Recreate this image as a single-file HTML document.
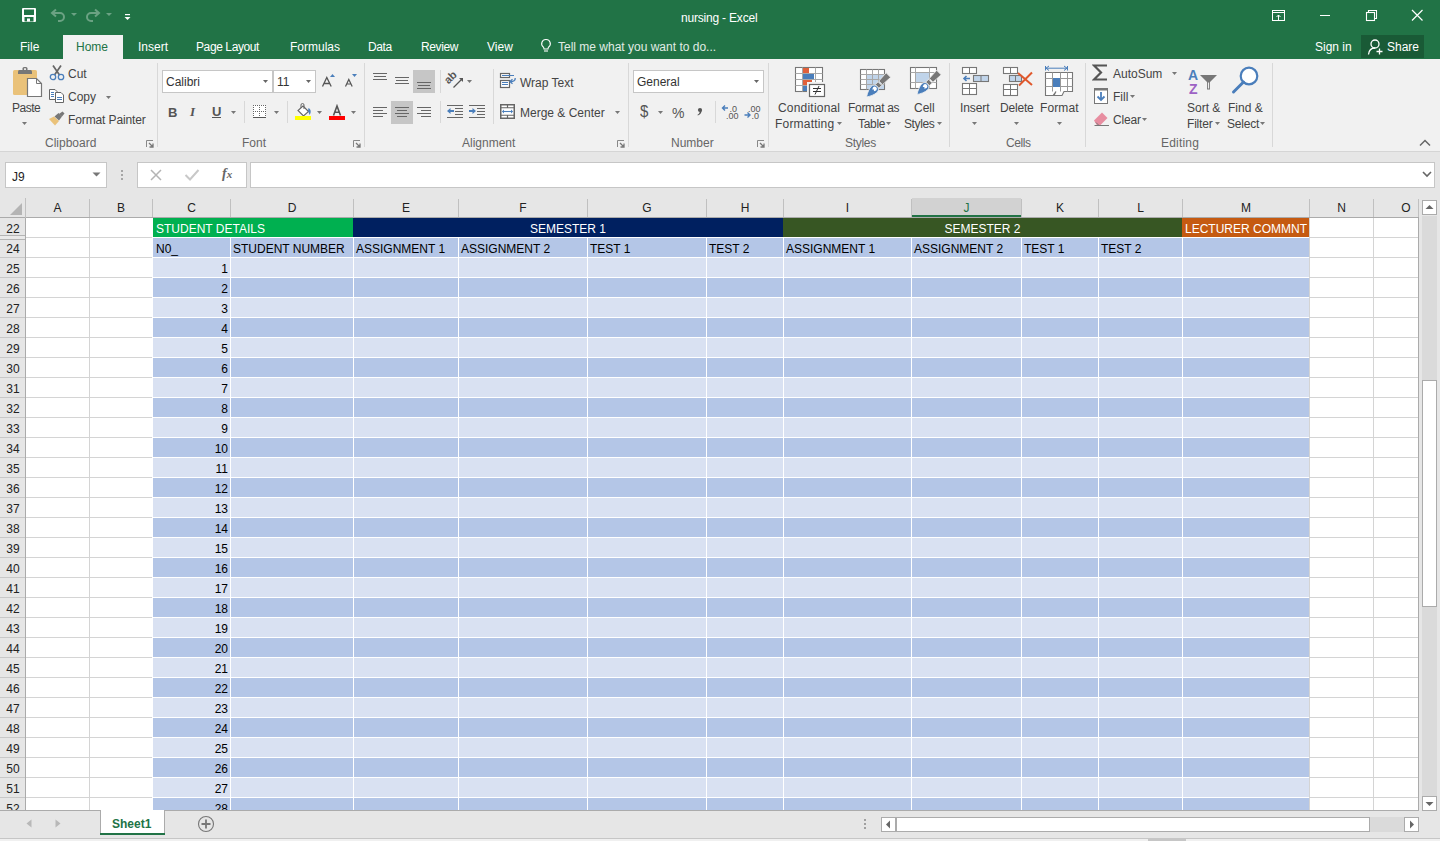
<!DOCTYPE html><html><head><meta charset="utf-8"><style>
html,body{margin:0;padding:0;} body{width:1440px;height:841px;overflow:hidden;position:relative;background:#E6E6E6;font-family:"Liberation Sans", sans-serif;}
.t{position:absolute;white-space:nowrap;}
.r{position:absolute;}
</style></head><body>
<div class="r" style="left:0px;top:0px;width:1440px;height:59px;background:#217346;"></div>
<svg class="r" style="left:21px;top:7px;" width="16" height="16" viewBox="0 0 16 16"><rect x="1" y="1" width="14" height="14" rx="1" fill="#fff"/><rect x="3" y="2.5" width="10" height="5.5" fill="#217346"/><rect x="3.5" y="10" width="9" height="4.5" fill="#217346"/><rect x="6" y="11.5" width="3" height="3" fill="#fff"/></svg>
<svg class="r" style="left:50px;top:7px;" width="16" height="16" viewBox="0 0 16 16"><path d="M3 6 H10 A4 4 0 0 1 10 14 H8" fill="none" stroke="#6BA283" stroke-width="2"/><path d="M6 2.5 L2 6 L6 9.5" fill="none" stroke="#6BA283" stroke-width="2"/></svg>
<svg class="r" style="left:70px;top:12px;" width="8" height="6" viewBox="0 0 8 6"><path d="M1 1 H7 L4 4 Z" fill="#6BA283"/></svg>
<svg class="r" style="left:85px;top:7px;" width="16" height="16" viewBox="0 0 16 16"><path d="M13 6 H6 A4 4 0 0 0 6 14 H8" fill="none" stroke="#6BA283" stroke-width="2"/><path d="M10 2.5 L14 6 L10 9.5" fill="none" stroke="#6BA283" stroke-width="2"/></svg>
<svg class="r" style="left:105px;top:12px;" width="8" height="6" viewBox="0 0 8 6"><path d="M1 1 H7 L4 4 Z" fill="#6BA283"/></svg>
<svg class="r" style="left:123px;top:12px;" width="10" height="10" viewBox="0 0 10 10"><rect x="2" y="2" width="5" height="1.2" fill="#fff"/><path d="M1.5 5 H7.5 L4.5 8 Z" fill="#fff"/></svg>
<div class="t" style="left:681px;top:11px;font-size:12px;line-height:14px;color:#fff;letter-spacing:-0.2px;">nursing - Excel</div>
<svg class="r" style="left:1271px;top:9px;" width="16" height="13" viewBox="0 0 16 13"><rect x="1.5" y="1.5" width="12" height="10" fill="none" stroke="#fff" stroke-width="1"/><line x1="1.5" y1="3.5" x2="13.5" y2="3.5" stroke="#fff" stroke-width="1"/><path d="M7.5 11 V6 M5.5 8 L7.5 6 L9.5 8" fill="none" stroke="#fff" stroke-width="1"/></svg>
<div class="r" style="left:1320px;top:15px;width:10px;height:1px;background:#fff;"></div>
<svg class="r" style="left:1365px;top:9px;" width="13" height="13" viewBox="0 0 13 13"><rect x="1.5" y="3.5" width="8" height="8" fill="none" stroke="#fff" stroke-width="1.1"/><path d="M3.5 3.5 V1.5 H11.5 V9.5 H9.5" fill="none" stroke="#fff" stroke-width="1.1"/></svg>
<svg class="r" style="left:1411px;top:9px;" width="13" height="13" viewBox="0 0 13 13"><path d="M1 1 L11.5 11.5 M11.5 1 L1 11.5" stroke="#fff" stroke-width="1.2"/></svg>
<div class="r" style="left:63px;top:35px;width:60px;height:24px;background:#F1F1F1;"></div>
<div class="t" style="left:20px;top:40px;font-size:12px;line-height:14px;color:#fff;">File</div>
<div class="t" style="left:138px;top:40px;font-size:12px;line-height:14px;color:#fff;">Insert</div>
<div class="t" style="left:196px;top:40px;font-size:12px;line-height:14px;color:#fff;letter-spacing:-0.4px;">Page Layout</div>
<div class="t" style="left:290px;top:40px;font-size:12px;line-height:14px;color:#fff;">Formulas</div>
<div class="t" style="left:368px;top:40px;font-size:12px;line-height:14px;color:#fff;letter-spacing:-0.4px;">Data</div>
<div class="t" style="left:421px;top:40px;font-size:12px;line-height:14px;color:#fff;letter-spacing:-0.4px;">Review</div>
<div class="t" style="left:487px;top:40px;font-size:12px;line-height:14px;color:#fff;">View</div>
<div class="t" style="left:76px;top:40px;font-size:12px;line-height:14px;color:#217346;">Home</div>
<svg class="r" style="left:540px;top:38px;" width="12" height="16" viewBox="0 0 12 16"><path d="M6 1.5 A4.2 4.2 0 0 0 3.3 9 C3.8 9.6 4 10.3 4 11 H8 C8 10.3 8.2 9.6 8.7 9 A4.2 4.2 0 0 0 6 1.5 Z" fill="none" stroke="#fff" stroke-width="1.1"/><line x1="4" y1="13" x2="8" y2="13" stroke="#fff" stroke-width="1.1"/></svg>
<div class="t" style="left:558px;top:40px;font-size:12px;line-height:14px;color:#E0ECE5;">Tell me what you want to do...</div>
<div class="t" style="left:1315px;top:40px;font-size:12px;line-height:14px;color:#fff;">Sign in</div>
<div class="r" style="left:1361px;top:35px;width:63px;height:23px;background:#195A36;"></div>
<svg class="r" style="left:1367px;top:38px;" width="17" height="18" viewBox="0 0 17 18"><circle cx="8" cy="6" r="4" fill="none" stroke="#fff" stroke-width="1.3"/><path d="M1.5 16.5 C2 12 4.5 10 8 10" fill="none" stroke="#fff" stroke-width="1.3"/><path d="M12.5 10.5 V16.5 M9.5 13.5 H15.5" stroke="#fff" stroke-width="1.3"/></svg>
<div class="t" style="left:1387px;top:40px;font-size:12px;line-height:14px;color:#fff;">Share</div>
<div class="r" style="left:0px;top:59px;width:1440px;height:92px;background:#F1F1F1;"></div>
<div class="r" style="left:0px;top:151px;width:1440px;height:1px;background:#D5D5D5;"></div>
<svg class="r" style="left:12px;top:66px;" width="31" height="32" viewBox="0 0 31 32"><rect x="1" y="4" width="24" height="25" rx="1.5" fill="#EAC27A"/><path d="M6 5.5 Q6 4 7.5 4 H18.5 Q20 4 20 5.5 V8 H6 Z" fill="#777"/><rect x="10.5" y="1" width="5" height="4" rx="1.5" fill="#777"/><rect x="12" y="2.3" width="2" height="1.6" fill="#F1F1F1"/><path d="M15.5 12.5 H24.5 L29.5 17.5 V30.5 H15.5 Z" fill="#fff" stroke="#777" stroke-width="1.2"/><path d="M24.5 12.5 V17.5 H29.5" fill="none" stroke="#777" stroke-width="1"/></svg>
<div class="t" style="left:12px;top:101px;font-size:12px;line-height:14px;color:#444;letter-spacing:-0.5px;">Paste</div>
<svg class="r" style="left:22px;top:122px;" width="5" height="3" viewBox="0 0 5 3"><path d="M0 0 H5 L2.5 3 Z" fill="#777"/></svg>
<svg class="r" style="left:49px;top:64px;" width="16" height="17" viewBox="0 0 16 17"><path d="M4 1.5 L10.5 11 M12 1.5 L5.5 11" stroke="#666" stroke-width="1.7"/><circle cx="4" cy="13" r="2.7" fill="none" stroke="#4A7EBB" stroke-width="1.3"/><circle cx="12" cy="13" r="2.7" fill="none" stroke="#4A7EBB" stroke-width="1.3"/></svg>
<div class="t" style="left:68px;top:67px;font-size:12px;line-height:14px;color:#444;">Cut</div>
<svg class="r" style="left:48px;top:88px;" width="17" height="16" viewBox="0 0 17 16"><path d="M1.5 1.5 H7 L9 3.5 V11.5 H1.5 Z" fill="#fff" stroke="#666" stroke-width="1"/><rect x="3" y="4" width="3" height="1" fill="#4A7EBB"/><rect x="3" y="6" width="3" height="1" fill="#4A7EBB"/><rect x="3" y="8" width="3" height="1" fill="#4A7EBB"/><path d="M7.5 4.5 H13 L15.5 7 V14.5 H7.5 Z" fill="#fff" stroke="#666" stroke-width="1"/><rect x="9" y="9" width="5" height="1" fill="#4A7EBB"/><rect x="9" y="11" width="5" height="1" fill="#4A7EBB"/></svg>
<div class="t" style="left:68px;top:90px;font-size:12px;line-height:14px;color:#444;">Copy</div>
<svg class="r" style="left:106px;top:96px;" width="5" height="3" viewBox="0 0 5 3"><path d="M0 0 H5 L2.5 3 Z" fill="#777"/></svg>
<svg class="r" style="left:48px;top:111px;" width="18" height="16" viewBox="0 0 18 16"><path d="M1 8 L7 14.5 L11 10 L6 5.5 Z" fill="#EAC27A"/><path d="M6.5 5.5 L10.5 2 L14 5.5 L11 9.5 Z" fill="#777"/><path d="M11 3 L14.5 0.5 L16.5 2.5 L14 5.5" fill="#777"/></svg>
<div class="t" style="left:68px;top:113px;font-size:12px;line-height:14px;color:#444;letter-spacing:-0.12px;">Format Painter</div>
<div class="t" style="left:45px;top:136px;font-size:12px;line-height:14px;color:#666;">Clipboard</div>
<svg class="r" style="left:146px;top:140px;" width="8" height="8" viewBox="0 0 8 8"><path d="M0.5 7 V0.5 H7" fill="none" stroke="#888" stroke-width="1"/><path d="M3 3 L6.5 6.5 M3.5 7 H7 V3.5" fill="none" stroke="#777" stroke-width="1.3"/></svg>
<div class="r" style="left:157px;top:63px;width:1px;height:84px;background:#D8D8D8;"></div>
<div class="r" style="left:162px;top:70px;width:111px;height:23px;background:#fff;border:1px solid #C6C6C6;box-sizing:border-box;"></div>
<div class="t" style="left:166px;top:75px;font-size:12px;line-height:14px;color:#333;">Calibri</div>
<svg class="r" style="left:263px;top:80px;" width="5" height="3" viewBox="0 0 5 3"><path d="M0 0 H5 L2.5 3 Z" fill="#666"/></svg>
<div class="r" style="left:273px;top:70px;width:43px;height:23px;background:#fff;border:1px solid #C6C6C6;box-sizing:border-box;"></div>
<div class="t" style="left:277px;top:75px;font-size:12px;line-height:14px;color:#333;">11</div>
<svg class="r" style="left:306px;top:80px;" width="5" height="3" viewBox="0 0 5 3"><path d="M0 0 H5 L2.5 3 Z" fill="#666"/></svg>
<svg class="r" style="left:320px;top:72px;" width="40" height="17" viewBox="0 0 40 17"><path d="M2.5 14.5 L6.8 5.5 L11.2 14.5 M4 11.5 H9.7" fill="none" stroke="#555" stroke-width="1.3"/><path d="M10 5 L12.5 2 L15 5 Z" fill="#4A7EBB"/><path d="M25.5 14.5 L28.8 7.5 L32.2 14.5 M26.8 12 H30.8" fill="none" stroke="#555" stroke-width="1.2"/><path d="M32 2 H37 L34.5 5 Z" fill="#4A7EBB"/></svg>
<div class="t" style="left:168px;top:106px;font-size:13px;line-height:14px;color:#555;font-weight:bold;">B</div>
<div class="t" style="left:190px;top:105px;font-family:'Liberation Serif',serif;font-style:italic;font-weight:bold;font-size:13px;line-height:14px;color:#555;">I</div>
<div class="t" style="left:212px;top:105px;font-size:13px;line-height:14px;color:#555;font-weight:bold;">U</div>
<div class="r" style="left:212px;top:117px;width:9px;height:1px;background:#555;"></div>
<svg class="r" style="left:231px;top:111px;" width="5" height="3" viewBox="0 0 5 3"><path d="M0 0 H5 L2.5 3 Z" fill="#777"/></svg>
<div class="r" style="left:244px;top:101px;width:1px;height:22px;background:#D8D8D8;"></div>
<svg class="r" style="left:253px;top:105px;" width="13" height="13" viewBox="0 0 13 13"><rect x="0" y="0" width="13" height="12" fill="#fff"/><rect x="0" y="0" width="1" height="1" fill="#666"/><rect x="0" y="2" width="1" height="1" fill="#666"/><rect x="0" y="4" width="1" height="1" fill="#666"/><rect x="0" y="6" width="1" height="1" fill="#666"/><rect x="0" y="8" width="1" height="1" fill="#666"/><rect x="0" y="10" width="1" height="1" fill="#666"/><rect x="2" y="0" width="1" height="1" fill="#666"/><rect x="2" y="6" width="1" height="1" fill="#666"/><rect x="4" y="0" width="1" height="1" fill="#666"/><rect x="4" y="6" width="1" height="1" fill="#666"/><rect x="6" y="0" width="1" height="1" fill="#666"/><rect x="6" y="2" width="1" height="1" fill="#666"/><rect x="6" y="4" width="1" height="1" fill="#666"/><rect x="6" y="6" width="1" height="1" fill="#666"/><rect x="6" y="8" width="1" height="1" fill="#666"/><rect x="6" y="10" width="1" height="1" fill="#666"/><rect x="8" y="0" width="1" height="1" fill="#666"/><rect x="8" y="6" width="1" height="1" fill="#666"/><rect x="10" y="0" width="1" height="1" fill="#666"/><rect x="10" y="6" width="1" height="1" fill="#666"/><rect x="12" y="0" width="1" height="1" fill="#666"/><rect x="12" y="2" width="1" height="1" fill="#666"/><rect x="12" y="4" width="1" height="1" fill="#666"/><rect x="12" y="6" width="1" height="1" fill="#666"/><rect x="12" y="8" width="1" height="1" fill="#666"/><rect x="12" y="10" width="1" height="1" fill="#666"/><rect x="0" y="12" width="13" height="1" fill="#555"/></svg>
<svg class="r" style="left:274px;top:111px;" width="5" height="3" viewBox="0 0 5 3"><path d="M0 0 H5 L2.5 3 Z" fill="#777"/></svg>
<div class="r" style="left:287px;top:101px;width:1px;height:22px;background:#D8D8D8;"></div>
<svg class="r" style="left:295px;top:102px;" width="17" height="18" viewBox="0 0 17 18"><path d="M8 4 L13.5 9.5 L8.5 14 L3 8.5 Z" fill="#fff" stroke="#666" stroke-width="1.1"/><path d="M6 6 V3 Q6 1.5 7.5 1.5 Q9 1.5 9 3 V7" fill="none" stroke="#666" stroke-width="1"/><path d="M13.5 6 C16 7 16.5 10.5 14.5 13 C14 11 13.5 10 13 9 Z" fill="#4A7EBB"/><rect x="0" y="14" width="16" height="4" fill="#FFFF00"/></svg>
<svg class="r" style="left:317px;top:111px;" width="5" height="3" viewBox="0 0 5 3"><path d="M0 0 H5 L2.5 3 Z" fill="#777"/></svg>
<svg class="r" style="left:329px;top:104px;" width="16" height="16" viewBox="0 0 16 16"><path d="M4.5 11.5 L8 2 L11.5 11.5 M5.8 8.2 H10.2" fill="none" stroke="#555" stroke-width="1.6"/><rect x="0" y="12" width="16" height="4" fill="#FF0000"/></svg>
<svg class="r" style="left:351px;top:111px;" width="5" height="3" viewBox="0 0 5 3"><path d="M0 0 H5 L2.5 3 Z" fill="#777"/></svg>
<div class="t" style="left:242px;top:136px;font-size:12px;line-height:14px;color:#666;">Font</div>
<svg class="r" style="left:353px;top:140px;" width="8" height="8" viewBox="0 0 8 8"><path d="M0.5 7 V0.5 H7" fill="none" stroke="#888" stroke-width="1"/><path d="M3 3 L6.5 6.5 M3.5 7 H7 V3.5" fill="none" stroke="#777" stroke-width="1.3"/></svg>
<div class="r" style="left:364px;top:63px;width:1px;height:84px;background:#D8D8D8;"></div>
<div class="r" style="left:373px;top:73px;width:14px;height:1px;background:#666;"></div>
<div class="r" style="left:374px;top:76px;width:12px;height:1px;background:#666;"></div>
<div class="r" style="left:373px;top:79px;width:14px;height:1px;background:#666;"></div>
<div class="r" style="left:395px;top:77px;width:14px;height:1px;background:#666;"></div>
<div class="r" style="left:396px;top:80px;width:12px;height:1px;background:#666;"></div>
<div class="r" style="left:395px;top:83px;width:14px;height:1px;background:#666;"></div>
<div class="r" style="left:413px;top:70px;width:22px;height:23px;background:#C6C6C6;"></div>
<div class="r" style="left:417px;top:82px;width:14px;height:1px;background:#666;"></div>
<div class="r" style="left:418px;top:85px;width:12px;height:1px;background:#666;"></div>
<div class="r" style="left:417px;top:88px;width:14px;height:1px;background:#666;"></div>
<div class="r" style="left:440px;top:70px;width:1px;height:23px;background:#D8D8D8;"></div>
<svg class="r" style="left:445px;top:71px;" width="22" height="19" viewBox="0 0 22 19"><text x="0" y="0" font-family="Liberation Sans" font-size="11" font-weight="bold" fill="#555" transform="translate(3.5 13.5) rotate(-45)">ab</text><path d="M8.5 16.5 L17 8" fill="none" stroke="#555" stroke-width="1.2"/><path d="M14 7 H18 V11 Z" fill="#555"/></svg>
<svg class="r" style="left:467px;top:80px;" width="5" height="3" viewBox="0 0 5 3"><path d="M0 0 H5 L2.5 3 Z" fill="#777"/></svg>
<div class="r" style="left:493px;top:69px;width:1px;height:55px;background:#D8D8D8;"></div>
<svg class="r" style="left:499px;top:72px;" width="18" height="17" viewBox="0 0 18 17"><rect x="1.5" y="1.5" width="9" height="4" fill="#fff" stroke="#666" stroke-width="1.2"/><path d="M3 3.5 H15" stroke="#4A7EBB" stroke-width="1"/><rect x="1.5" y="8.5" width="9" height="7" fill="#fff" stroke="#666" stroke-width="1.2"/><path d="M3 10.5 H9 M3 12.5 H9" stroke="#4A7EBB" stroke-width="1"/><path d="M16.2 6 C16.5 8.5 14.5 9.5 11.5 9.5" fill="none" stroke="#4A7EBB" stroke-width="1.3"/><path d="M13.5 7.3 L11 9.5 L13.5 11.7" fill="none" stroke="#4A7EBB" stroke-width="1.3"/></svg>
<div class="t" style="left:520px;top:76px;font-size:12px;line-height:14px;color:#444;">Wrap Text</div>
<div class="r" style="left:373px;top:107px;width:14px;height:1px;background:#666;"></div>
<div class="r" style="left:373px;top:110px;width:10px;height:1px;background:#666;"></div>
<div class="r" style="left:373px;top:113px;width:14px;height:1px;background:#666;"></div>
<div class="r" style="left:373px;top:116px;width:10px;height:1px;background:#666;"></div>
<div class="r" style="left:391px;top:101px;width:22px;height:23px;background:#C6C6C6;"></div>
<div class="r" style="left:395px;top:107px;width:14px;height:1px;background:#666;"></div>
<div class="r" style="left:397px;top:110px;width:10px;height:1px;background:#666;"></div>
<div class="r" style="left:395px;top:113px;width:14px;height:1px;background:#666;"></div>
<div class="r" style="left:397px;top:116px;width:10px;height:1px;background:#666;"></div>
<div class="r" style="left:417px;top:107px;width:14px;height:1px;background:#666;"></div>
<div class="r" style="left:421px;top:110px;width:10px;height:1px;background:#666;"></div>
<div class="r" style="left:417px;top:113px;width:14px;height:1px;background:#666;"></div>
<div class="r" style="left:421px;top:116px;width:10px;height:1px;background:#666;"></div>
<div class="r" style="left:440px;top:101px;width:1px;height:22px;background:#D8D8D8;"></div>
<div class="r" style="left:447px;top:105px;width:16px;height:1px;background:#666;"></div>
<div class="r" style="left:455px;top:108px;width:8px;height:1px;background:#666;"></div>
<div class="r" style="left:455px;top:111px;width:8px;height:1px;background:#666;"></div>
<div class="r" style="left:455px;top:114px;width:8px;height:1px;background:#666;"></div>
<div class="r" style="left:447px;top:117px;width:16px;height:1px;background:#666;"></div>
<svg class="r" style="left:446px;top:107px;" width="9" height="9" viewBox="0 0 9 9"><path d="M1 3.5 L4.5 0.5 V2.5 H8 V4.5 H4.5 V6.5 Z" fill="#4A7EBB" transform="translate(0 0.5)"/></svg>
<div class="r" style="left:469px;top:105px;width:16px;height:1px;background:#666;"></div>
<div class="r" style="left:477px;top:108px;width:8px;height:1px;background:#666;"></div>
<div class="r" style="left:477px;top:111px;width:8px;height:1px;background:#666;"></div>
<div class="r" style="left:477px;top:114px;width:8px;height:1px;background:#666;"></div>
<div class="r" style="left:469px;top:117px;width:16px;height:1px;background:#666;"></div>
<svg class="r" style="left:468px;top:107px;" width="9" height="9" viewBox="0 0 9 9"><path d="M8 3.5 L4.5 0.5 V2.5 H1 V4.5 H4.5 V6.5 Z" fill="#4A7EBB" transform="translate(0 0.5)"/></svg>
<svg class="r" style="left:499px;top:103px;" width="17" height="17" viewBox="0 0 17 17"><rect x="1.75" y="1.75" width="13.5" height="13.5" fill="#fff" stroke="#666" stroke-width="1.5"/><path d="M1 4.75 H16 M1 12.25 H16 M8.5 1 V4.75 M8.5 12.25 V16" stroke="#666" stroke-width="1.2"/><path d="M3.5 8.5 H13.5" stroke="#4A7EBB" stroke-width="1.1"/><path d="M3 8.5 L5 6.5 V10.5 Z M14 8.5 L12 6.5 V10.5 Z" fill="#4A7EBB"/></svg>
<div class="t" style="left:520px;top:106px;font-size:12px;line-height:14px;color:#444;">Merge &amp; Center</div>
<svg class="r" style="left:615px;top:111px;" width="5" height="3" viewBox="0 0 5 3"><path d="M0 0 H5 L2.5 3 Z" fill="#777"/></svg>
<div class="t" style="left:462px;top:136px;font-size:12px;line-height:14px;color:#666;">Alignment</div>
<svg class="r" style="left:617px;top:140px;" width="8" height="8" viewBox="0 0 8 8"><path d="M0.5 7 V0.5 H7" fill="none" stroke="#888" stroke-width="1"/><path d="M3 3 L6.5 6.5 M3.5 7 H7 V3.5" fill="none" stroke="#777" stroke-width="1.3"/></svg>
<div class="r" style="left:628px;top:63px;width:1px;height:84px;background:#D8D8D8;"></div>
<div class="r" style="left:633px;top:70px;width:131px;height:23px;background:#fff;border:1px solid #C6C6C6;box-sizing:border-box;"></div>
<div class="t" style="left:637px;top:75px;font-size:12px;line-height:14px;color:#333;">General</div>
<svg class="r" style="left:754px;top:80px;" width="5" height="3" viewBox="0 0 5 3"><path d="M0 0 H5 L2.5 3 Z" fill="#666"/></svg>
<div class="t" style="left:640px;top:104px;font-size:15px;line-height:14px;color:#555;transform:scaleY(1.1);">$</div>
<svg class="r" style="left:658px;top:111px;" width="5" height="3" viewBox="0 0 5 3"><path d="M0 0 H5 L2.5 3 Z" fill="#777"/></svg>
<div class="t" style="left:672px;top:106px;font-size:14px;line-height:14px;color:#555;">%</div>
<svg class="r" style="left:696px;top:107px;" width="7" height="9" viewBox="0 0 7 9"><circle cx="4" cy="3" r="2.1" fill="#555"/><path d="M5.6 3.5 C5.6 6 4 7.8 1.8 8.5 L1.5 7.8 C2.8 7 3.6 6 3.8 4.5 Z" fill="#555"/></svg>
<div class="r" style="left:715px;top:101px;width:1px;height:22px;background:#D8D8D8;"></div>
<svg class="r" style="left:721px;top:103px;" width="18" height="17" viewBox="0 0 18 17"><path d="M1.5 5 H7 M4 2.5 L1.5 5 L4 7.5" fill="none" stroke="#4A7EBB" stroke-width="1.4"/><text x="8.5" y="8.5" font-family="Liberation Sans" font-size="9" fill="#555">.0</text><text x="5" y="15.5" font-family="Liberation Sans" font-size="9" fill="#555">.00</text></svg>
<svg class="r" style="left:743px;top:103px;" width="18" height="17" viewBox="0 0 18 17"><text x="5" y="8.5" font-family="Liberation Sans" font-size="9" fill="#555">.00</text><path d="M1.5 12 H7 M4.5 9.5 L7 12 L4.5 14.5" fill="none" stroke="#4A7EBB" stroke-width="1.4"/><text x="8.5" y="15.5" font-family="Liberation Sans" font-size="9" fill="#555">.0</text></svg>
<div class="t" style="left:671px;top:136px;font-size:12px;line-height:14px;color:#666;">Number</div>
<svg class="r" style="left:757px;top:140px;" width="8" height="8" viewBox="0 0 8 8"><path d="M0.5 7 V0.5 H7" fill="none" stroke="#888" stroke-width="1"/><path d="M3 3 L6.5 6.5 M3.5 7 H7 V3.5" fill="none" stroke="#777" stroke-width="1.3"/></svg>
<div class="r" style="left:768px;top:63px;width:1px;height:84px;background:#D8D8D8;"></div>
<svg class="r" style="left:794px;top:66px;" width="32" height="32" viewBox="0 0 32 32"><rect x="1.5" y="1.5" width="27" height="24" fill="#fff" stroke="#777" stroke-width="1.1"/><path d="M8.5 1.5 V25.5 M21.5 1.5 V25.5 M1.5 7.5 H28.5 M1.5 13.5 H28.5 M1.5 19.5 H28.5" stroke="#A8A8A8" stroke-width="1"/><rect x="9" y="2" width="6" height="5" fill="#E0603A"/><rect x="9" y="8" width="11" height="5" fill="#4A7EBB"/><rect x="9" y="14" width="9" height="5" fill="#E0603A"/><rect x="9" y="20" width="4" height="5" fill="#4A7EBB"/><rect x="13" y="16" width="20" height="16" fill="#F1F1F1"/><rect x="15.5" y="18.5" width="15" height="12" fill="#fff" stroke="#666" stroke-width="1.2"/><path d="M19 22.5 H27 M19 25.5 H27" stroke="#333" stroke-width="1"/><path d="M21 28.5 L25 20" stroke="#333" stroke-width="1"/></svg>
<div class="t" style="left:778px;top:101px;font-size:12px;line-height:14px;color:#444;letter-spacing:0.2px;">Conditional</div>
<div class="t" style="left:775px;top:117px;font-size:12px;line-height:14px;color:#444;letter-spacing:0.2px;">Formatting</div>
<svg class="r" style="left:837px;top:122px;" width="5" height="3" viewBox="0 0 5 3"><path d="M0 0 H5 L2.5 3 Z" fill="#777"/></svg>
<svg class="r" style="left:855px;top:62px;" width="40" height="40" viewBox="0 0 40 40"><rect x="5.5" y="7.5" width="24" height="20" fill="#fff" stroke="#777" stroke-width="1.1"/><rect x="12" y="13" width="17" height="14" fill="#C0D4EA"/><path d="M11.5 7.5 V27.5 M17.5 7.5 V27.5 M23.5 7.5 V27.5 M5.5 12.5 H29.5 M5.5 17.5 H29.5 M5.5 22.5 H29.5" stroke="#A8A8A8" stroke-width="1"/><g transform="translate(11.5 35) rotate(45)"><path d="M0 0 C-2.5 -4 -4.2 -8 -4.2 -11 A4.2 4.2 0 0 1 4.2 -11 C4.2 -7 2 -3 0 0 Z" fill="#4A7EBB" stroke="#F1F1F1" stroke-width="0.8"/><path d="M-2.2 -11.5 A2.2 2.2 0 0 1 2.2 -11.5 L1.2 -9.3 L0 -10.5 L-1.2 -9.3 Z" fill="#fff"/><rect x="-2.6" y="-19" width="5.2" height="4" fill="#777" stroke="#F1F1F1" stroke-width="0.8"/><path d="M-2.6 -20 L-3.2 -31 H3.2 L2.6 -20 Z" fill="#777" stroke="#F1F1F1" stroke-width="0.8"/></g></svg>
<div class="t" style="left:848px;top:101px;font-size:12px;line-height:14px;color:#444;letter-spacing:-0.3px;">Format as</div>
<div class="t" style="left:858px;top:117px;font-size:12px;line-height:14px;color:#444;letter-spacing:-0.3px;">Table</div>
<svg class="r" style="left:886px;top:122px;" width="5" height="3" viewBox="0 0 5 3"><path d="M0 0 H5 L2.5 3 Z" fill="#777"/></svg>
<svg class="r" style="left:905px;top:62px;" width="40" height="40" viewBox="0 0 40 40"><rect x="5.5" y="5.5" width="26" height="21" fill="#fff" stroke="#777" stroke-width="1.1"/><path d="M10.5 5.5 V26.5 M24.5 5.5 V26.5 M5.5 10.5 H31.5 M5.5 20.5 H31.5" stroke="#A8A8A8" stroke-width="1"/><rect x="11" y="11" width="13" height="9" fill="#C0D4EA"/><g transform="translate(12 32.5) rotate(45)"><path d="M0 0 C-2.5 -4 -4.2 -8 -4.2 -11 A4.2 4.2 0 0 1 4.2 -11 C4.2 -7 2 -3 0 0 Z" fill="#4A7EBB" stroke="#F1F1F1" stroke-width="0.8"/><path d="M-2.2 -11.5 A2.2 2.2 0 0 1 2.2 -11.5 L1.2 -9.3 L0 -10.5 L-1.2 -9.3 Z" fill="#fff"/><rect x="-2.6" y="-19" width="5.2" height="4" fill="#777" stroke="#F1F1F1" stroke-width="0.8"/><path d="M-2.6 -20 L-3.2 -31 H3.2 L2.6 -20 Z" fill="#777" stroke="#F1F1F1" stroke-width="0.8"/></g></svg>
<div class="t" style="left:914px;top:101px;font-size:12px;line-height:14px;color:#444;">Cell</div>
<div class="t" style="left:904px;top:117px;font-size:12px;line-height:14px;color:#444;letter-spacing:-0.4px;">Styles</div>
<svg class="r" style="left:937px;top:122px;" width="5" height="3" viewBox="0 0 5 3"><path d="M0 0 H5 L2.5 3 Z" fill="#777"/></svg>
<div class="t" style="left:845px;top:136px;font-size:12px;line-height:14px;color:#666;letter-spacing:-0.3px;">Styles</div>
<div class="r" style="left:949px;top:63px;width:1px;height:84px;background:#D8D8D8;"></div>
<svg class="r" style="left:961px;top:66px;" width="30" height="30" viewBox="0 0 30 30"><rect x="1.5" y="1.5" width="14" height="6" fill="#fff" stroke="#777" stroke-width="1.1"/><path d="M8.5 1.5 V7.5" stroke="#777" stroke-width="1"/><rect x="12.5" y="9.5" width="15" height="6" fill="#C0D4EA" stroke="#777" stroke-width="1.1"/><path d="M20 9.5 V15.5" stroke="#777" stroke-width="1"/><path d="M3 12.5 H9 M5.5 10 L3 12.5 L5.5 15" fill="none" stroke="#4A7EBB" stroke-width="1.6"/><rect x="1.5" y="17.5" width="14" height="11" fill="#fff" stroke="#777" stroke-width="1.1"/><path d="M8.5 17.5 V28.5 M1.5 22.5 H15.5" stroke="#777" stroke-width="1"/></svg>
<div class="t" style="left:960px;top:101px;font-size:12px;line-height:14px;color:#444;letter-spacing:-0.1px;">Insert</div>
<svg class="r" style="left:972px;top:122px;" width="5" height="3" viewBox="0 0 5 3"><path d="M0 0 H5 L2.5 3 Z" fill="#777"/></svg>
<svg class="r" style="left:1002px;top:66px;" width="33" height="31" viewBox="0 0 33 31"><rect x="1.5" y="1.5" width="14" height="6" fill="#fff" stroke="#777" stroke-width="1.1"/><path d="M8.5 1.5 V7.5" stroke="#777" stroke-width="1"/><rect x="7.5" y="9.5" width="12" height="6" fill="#C0D4EA" stroke="#777" stroke-width="1.1"/><path d="M13.5 9.5 V15.5" stroke="#777" stroke-width="1"/><rect x="1.5" y="18.5" width="14" height="11" fill="#fff" stroke="#777" stroke-width="1.1"/><path d="M8.5 18.5 V29.5 M1.5 23.5 H15.5" stroke="#777" stroke-width="1"/><path d="M16 7 L30 19 M30 6.5 L17 19.5" stroke="#E0582C" stroke-width="2"/></svg>
<div class="t" style="left:1000px;top:101px;font-size:12px;line-height:14px;color:#444;letter-spacing:-0.2px;">Delete</div>
<svg class="r" style="left:1014px;top:122px;" width="5" height="3" viewBox="0 0 5 3"><path d="M0 0 H5 L2.5 3 Z" fill="#777"/></svg>
<svg class="r" style="left:1044px;top:65px;" width="31" height="33" viewBox="0 0 31 33"><path d="M1.5 1 V5.5 M23.5 1 V5.5 M2 3.2 H23 M5 1 L2 3.2 L5 5.5 M20 1 L23 3.2 L20 5.5" fill="none" stroke="#4A7EBB" stroke-width="1"/><path d="M1.5 7.5 H28.5 V26.5 L20 26.5 L18 30.5 H10 L12 26.5 L9 30.5 H1.5 Z" fill="#fff" stroke="#777" stroke-width="1.1"/><path d="M1.5 13.5 H28.5 M1.5 21.5 H28.5 M8.5 7.5 V26.5 M16.5 7.5 V26.5 M23.5 7.5 V26.5" stroke="#999" stroke-width="1"/><rect x="9" y="13" width="7" height="9" fill="#4A7EBB"/></svg>
<div class="t" style="left:1040px;top:101px;font-size:12px;line-height:14px;color:#444;letter-spacing:0.1px;">Format</div>
<svg class="r" style="left:1057px;top:122px;" width="5" height="3" viewBox="0 0 5 3"><path d="M0 0 H5 L2.5 3 Z" fill="#777"/></svg>
<div class="t" style="left:1006px;top:136px;font-size:12px;line-height:14px;color:#666;letter-spacing:-0.4px;">Cells</div>
<div class="r" style="left:1085px;top:63px;width:1px;height:84px;background:#D8D8D8;"></div>
<svg class="r" style="left:1092px;top:64px;" width="17" height="17" viewBox="0 0 17 17"><path d="M15 1.5 H2 L9 8.5 L2 15.5 H15" fill="none" stroke="#555" stroke-width="2.2"/></svg>
<div class="t" style="left:1113px;top:67px;font-size:12px;line-height:14px;color:#444;">AutoSum</div>
<svg class="r" style="left:1172px;top:72px;" width="5" height="3" viewBox="0 0 5 3"><path d="M0 0 H5 L2.5 3 Z" fill="#777"/></svg>
<svg class="r" style="left:1093px;top:87px;" width="16" height="18" viewBox="0 0 16 18"><rect x="1.5" y="1.5" width="13" height="15" fill="#fff" stroke="#777" stroke-width="1"/><rect x="1" y="1" width="14" height="2.5" fill="#777"/><path d="M8 5 V13 M4.5 9.5 L8 13 L11.5 9.5" fill="none" stroke="#4A7EBB" stroke-width="1.8"/></svg>
<div class="t" style="left:1113px;top:90px;font-size:12px;line-height:14px;color:#444;">Fill</div>
<svg class="r" style="left:1130px;top:95px;" width="5" height="3" viewBox="0 0 5 3"><path d="M0 0 H5 L2.5 3 Z" fill="#777"/></svg>
<svg class="r" style="left:1093px;top:111px;" width="17" height="15" viewBox="0 0 17 15"><path d="M1 9.5 L9 1.5 L14.5 7 L7 14.5 H4 Z" fill="#E78DA0"/><path d="M3 11.5 L5.5 14 M1.5 14.5 H16" stroke="#777" stroke-width="1"/></svg>
<div class="t" style="left:1113px;top:113px;font-size:12px;line-height:14px;color:#444;letter-spacing:-0.2px;">Clear</div>
<svg class="r" style="left:1142px;top:118px;" width="5" height="3" viewBox="0 0 5 3"><path d="M0 0 H5 L2.5 3 Z" fill="#777"/></svg>
<div class="t" style="left:1188px;top:68px;font-size:14px;line-height:14px;color:#4A7EBB;font-weight:bold;">A</div>
<div class="t" style="left:1189px;top:82px;font-size:14px;line-height:14px;color:#9D62C4;font-weight:bold;">Z</div>
<svg class="r" style="left:1199px;top:74px;" width="19" height="17" viewBox="0 0 19 17"><path d="M1 1 H18 L11 8 V15.5 H8 V8 Z" fill="#777"/><path d="M9.5 8.5 V14.5" stroke="#eee" stroke-width="1.2"/></svg>
<div class="t" style="left:1187px;top:101px;font-size:12px;line-height:14px;color:#444;">Sort &amp;</div>
<div class="t" style="left:1187px;top:117px;font-size:12px;line-height:14px;color:#444;letter-spacing:-0.2px;">Filter</div>
<svg class="r" style="left:1215px;top:122px;" width="5" height="3" viewBox="0 0 5 3"><path d="M0 0 H5 L2.5 3 Z" fill="#777"/></svg>
<svg class="r" style="left:1230px;top:64px;" width="30" height="32" viewBox="0 0 30 32"><circle cx="19" cy="12" r="8.3" fill="#fff" stroke="#4A7EBB" stroke-width="2.2"/><path d="M13.5 18 L3.5 28" stroke="#4A7EBB" stroke-width="3" stroke-linecap="round"/></svg>
<div class="t" style="left:1228px;top:101px;font-size:12px;line-height:14px;color:#444;">Find &amp;</div>
<div class="t" style="left:1227px;top:117px;font-size:12px;line-height:14px;color:#444;letter-spacing:-0.2px;">Select</div>
<svg class="r" style="left:1260px;top:122px;" width="5" height="3" viewBox="0 0 5 3"><path d="M0 0 H5 L2.5 3 Z" fill="#777"/></svg>
<div class="t" style="left:1161px;top:136px;font-size:12px;line-height:14px;color:#666;letter-spacing:0.2px;">Editing</div>
<div class="r" style="left:1272px;top:63px;width:1px;height:84px;background:#D8D8D8;"></div>
<svg class="r" style="left:1419px;top:139px;" width="12" height="8" viewBox="0 0 12 8"><path d="M1 6.5 L6 1.5 L11 6.5" fill="none" stroke="#666" stroke-width="1.5"/></svg>
<div class="r" style="left:5px;top:162px;width:100px;height:24px;background:#fff;border:1px solid #C6C6C6;"></div>
<div class="t" style="left:12px;top:170px;font-size:12px;line-height:14px;color:#222;">J9</div>
<svg class="r" style="left:92px;top:172px;" width="9" height="6" viewBox="0 0 9 6"><path d="M0.5 0.5 H8.5 L4.5 4.5 Z" fill="#777"/></svg>
<div class="r" style="left:121px;top:170px;width:2px;height:2px;background:#A6A6A6;"></div>
<div class="r" style="left:121px;top:174px;width:2px;height:2px;background:#A6A6A6;"></div>
<div class="r" style="left:121px;top:178px;width:2px;height:2px;background:#A6A6A6;"></div>
<div class="r" style="left:137px;top:162px;width:108px;height:24px;background:#fff;border:1px solid #C6C6C6;"></div>
<svg class="r" style="left:149px;top:168px;" width="14" height="14" viewBox="0 0 14 14"><path d="M2 2 L12 12 M12 2 L2 12" stroke="#B4B4B4" stroke-width="1.5"/></svg>
<svg class="r" style="left:184px;top:168px;" width="16" height="14" viewBox="0 0 16 14"><path d="M1.5 7 L6 11.5 L14.5 2" fill="none" stroke="#C8C8C8" stroke-width="2"/></svg>
<div class="t" style="left:222px;top:165px;font-family:'Liberation Serif',serif;font-style:italic;font-weight:bold;font-size:14px;line-height:18px;color:#666;">f<span style="font-size:11px;">x</span></div>
<div class="r" style="left:250px;top:162px;width:1183px;height:24px;background:#fff;border:1px solid #C6C6C6;"></div>
<svg class="r" style="left:1422px;top:171px;" width="10" height="7" viewBox="0 0 10 7"><path d="M1 1 L5 5 L9 1" fill="none" stroke="#666" stroke-width="1.6"/></svg>
<div class="r" style="left:0px;top:198px;width:1418px;height:19px;background:#E6E6E6;"></div>
<div class="r" style="left:0px;top:217px;width:1419px;height:1px;background:#ABABAB;"></div>
<svg class="r" style="left:9px;top:202px;" width="14" height="14" viewBox="0 0 14 14"><path d="M13 1 V13 H1 Z" fill="#B4B4B4"/></svg>
<div class="r" style="left:89px;top:199px;width:1px;height:18px;background:#C0C0C0;"></div>
<div class="t" style="left:-142.5px;width:400px;text-align:center;top:201px;font-size:12px;line-height:14px;color:#222;">A</div>
<div class="r" style="left:152px;top:199px;width:1px;height:18px;background:#C0C0C0;"></div>
<div class="t" style="left:-79.0px;width:400px;text-align:center;top:201px;font-size:12px;line-height:14px;color:#222;">B</div>
<div class="r" style="left:230px;top:199px;width:1px;height:18px;background:#C0C0C0;"></div>
<div class="t" style="left:-8.5px;width:400px;text-align:center;top:201px;font-size:12px;line-height:14px;color:#222;">C</div>
<div class="r" style="left:353px;top:199px;width:1px;height:18px;background:#C0C0C0;"></div>
<div class="t" style="left:92.0px;width:400px;text-align:center;top:201px;font-size:12px;line-height:14px;color:#222;">D</div>
<div class="r" style="left:458px;top:199px;width:1px;height:18px;background:#C0C0C0;"></div>
<div class="t" style="left:206.0px;width:400px;text-align:center;top:201px;font-size:12px;line-height:14px;color:#222;">E</div>
<div class="r" style="left:587px;top:199px;width:1px;height:18px;background:#C0C0C0;"></div>
<div class="t" style="left:323.0px;width:400px;text-align:center;top:201px;font-size:12px;line-height:14px;color:#222;">F</div>
<div class="r" style="left:706px;top:199px;width:1px;height:18px;background:#C0C0C0;"></div>
<div class="t" style="left:447.0px;width:400px;text-align:center;top:201px;font-size:12px;line-height:14px;color:#222;">G</div>
<div class="r" style="left:783px;top:199px;width:1px;height:18px;background:#C0C0C0;"></div>
<div class="t" style="left:545.0px;width:400px;text-align:center;top:201px;font-size:12px;line-height:14px;color:#222;">H</div>
<div class="r" style="left:911px;top:199px;width:1px;height:18px;background:#C0C0C0;"></div>
<div class="t" style="left:647.5px;width:400px;text-align:center;top:201px;font-size:12px;line-height:14px;color:#222;">I</div>
<div class="r" style="left:912px;top:198px;width:109px;height:19px;background:#D2D2D2;"></div>
<div class="r" style="left:912px;top:215px;width:109px;height:2px;background:#217346;"></div>
<div class="r" style="left:1021px;top:199px;width:1px;height:18px;background:#C0C0C0;"></div>
<div class="t" style="left:766.5px;width:400px;text-align:center;top:201px;font-size:12px;line-height:14px;color:#217346;">J</div>
<div class="r" style="left:1098px;top:199px;width:1px;height:18px;background:#C0C0C0;"></div>
<div class="t" style="left:860.0px;width:400px;text-align:center;top:201px;font-size:12px;line-height:14px;color:#222;">K</div>
<div class="r" style="left:1182px;top:199px;width:1px;height:18px;background:#C0C0C0;"></div>
<div class="t" style="left:940.5px;width:400px;text-align:center;top:201px;font-size:12px;line-height:14px;color:#222;">L</div>
<div class="r" style="left:1309px;top:199px;width:1px;height:18px;background:#C0C0C0;"></div>
<div class="t" style="left:1046.0px;width:400px;text-align:center;top:201px;font-size:12px;line-height:14px;color:#222;">M</div>
<div class="r" style="left:1373px;top:199px;width:1px;height:18px;background:#C0C0C0;"></div>
<div class="t" style="left:1141.5px;width:400px;text-align:center;top:201px;font-size:12px;line-height:14px;color:#222;">N</div>
<div class="r" style="left:1418px;top:199px;width:1px;height:18px;background:#C0C0C0;"></div>
<div class="t" style="left:1206px;width:400px;text-align:center;top:201px;font-size:12px;line-height:14px;color:#222;">O</div>
<div class="r" style="left:25px;top:198px;width:1px;height:20px;background:#C0C0C0;"></div>
<div class="r" style="left:0px;top:218px;width:25px;height:592px;background:#E6E6E6;"></div>
<div class="r" style="left:25px;top:218px;width:1px;height:592px;background:#ABABAB;"></div>
<div class="r" style="left:26px;top:218px;width:1392px;height:592px;background:#fff;"></div>
<div class="r" style="left:1418px;top:217px;width:1px;height:594px;background:#ABABAB;"></div>
<div class="r" style="left:26px;top:237px;width:1392px;height:1px;background:#D4D4D4;"></div>
<div class="r" style="left:26px;top:257px;width:1392px;height:1px;background:#D4D4D4;"></div>
<div class="r" style="left:0px;top:257px;width:25px;height:1px;background:#C8C8C8;"></div>
<div class="r" style="left:26px;top:277px;width:1392px;height:1px;background:#D4D4D4;"></div>
<div class="r" style="left:0px;top:277px;width:25px;height:1px;background:#C8C8C8;"></div>
<div class="r" style="left:26px;top:297px;width:1392px;height:1px;background:#D4D4D4;"></div>
<div class="r" style="left:0px;top:297px;width:25px;height:1px;background:#C8C8C8;"></div>
<div class="r" style="left:26px;top:317px;width:1392px;height:1px;background:#D4D4D4;"></div>
<div class="r" style="left:0px;top:317px;width:25px;height:1px;background:#C8C8C8;"></div>
<div class="r" style="left:26px;top:337px;width:1392px;height:1px;background:#D4D4D4;"></div>
<div class="r" style="left:0px;top:337px;width:25px;height:1px;background:#C8C8C8;"></div>
<div class="r" style="left:26px;top:357px;width:1392px;height:1px;background:#D4D4D4;"></div>
<div class="r" style="left:0px;top:357px;width:25px;height:1px;background:#C8C8C8;"></div>
<div class="r" style="left:26px;top:377px;width:1392px;height:1px;background:#D4D4D4;"></div>
<div class="r" style="left:0px;top:377px;width:25px;height:1px;background:#C8C8C8;"></div>
<div class="r" style="left:26px;top:397px;width:1392px;height:1px;background:#D4D4D4;"></div>
<div class="r" style="left:0px;top:397px;width:25px;height:1px;background:#C8C8C8;"></div>
<div class="r" style="left:26px;top:417px;width:1392px;height:1px;background:#D4D4D4;"></div>
<div class="r" style="left:0px;top:417px;width:25px;height:1px;background:#C8C8C8;"></div>
<div class="r" style="left:26px;top:437px;width:1392px;height:1px;background:#D4D4D4;"></div>
<div class="r" style="left:0px;top:437px;width:25px;height:1px;background:#C8C8C8;"></div>
<div class="r" style="left:26px;top:457px;width:1392px;height:1px;background:#D4D4D4;"></div>
<div class="r" style="left:0px;top:457px;width:25px;height:1px;background:#C8C8C8;"></div>
<div class="r" style="left:26px;top:477px;width:1392px;height:1px;background:#D4D4D4;"></div>
<div class="r" style="left:0px;top:477px;width:25px;height:1px;background:#C8C8C8;"></div>
<div class="r" style="left:26px;top:497px;width:1392px;height:1px;background:#D4D4D4;"></div>
<div class="r" style="left:0px;top:497px;width:25px;height:1px;background:#C8C8C8;"></div>
<div class="r" style="left:26px;top:517px;width:1392px;height:1px;background:#D4D4D4;"></div>
<div class="r" style="left:0px;top:517px;width:25px;height:1px;background:#C8C8C8;"></div>
<div class="r" style="left:26px;top:537px;width:1392px;height:1px;background:#D4D4D4;"></div>
<div class="r" style="left:0px;top:537px;width:25px;height:1px;background:#C8C8C8;"></div>
<div class="r" style="left:26px;top:557px;width:1392px;height:1px;background:#D4D4D4;"></div>
<div class="r" style="left:0px;top:557px;width:25px;height:1px;background:#C8C8C8;"></div>
<div class="r" style="left:26px;top:577px;width:1392px;height:1px;background:#D4D4D4;"></div>
<div class="r" style="left:0px;top:577px;width:25px;height:1px;background:#C8C8C8;"></div>
<div class="r" style="left:26px;top:597px;width:1392px;height:1px;background:#D4D4D4;"></div>
<div class="r" style="left:0px;top:597px;width:25px;height:1px;background:#C8C8C8;"></div>
<div class="r" style="left:26px;top:617px;width:1392px;height:1px;background:#D4D4D4;"></div>
<div class="r" style="left:0px;top:617px;width:25px;height:1px;background:#C8C8C8;"></div>
<div class="r" style="left:26px;top:637px;width:1392px;height:1px;background:#D4D4D4;"></div>
<div class="r" style="left:0px;top:637px;width:25px;height:1px;background:#C8C8C8;"></div>
<div class="r" style="left:26px;top:657px;width:1392px;height:1px;background:#D4D4D4;"></div>
<div class="r" style="left:0px;top:657px;width:25px;height:1px;background:#C8C8C8;"></div>
<div class="r" style="left:26px;top:677px;width:1392px;height:1px;background:#D4D4D4;"></div>
<div class="r" style="left:0px;top:677px;width:25px;height:1px;background:#C8C8C8;"></div>
<div class="r" style="left:26px;top:697px;width:1392px;height:1px;background:#D4D4D4;"></div>
<div class="r" style="left:0px;top:697px;width:25px;height:1px;background:#C8C8C8;"></div>
<div class="r" style="left:26px;top:717px;width:1392px;height:1px;background:#D4D4D4;"></div>
<div class="r" style="left:0px;top:717px;width:25px;height:1px;background:#C8C8C8;"></div>
<div class="r" style="left:26px;top:737px;width:1392px;height:1px;background:#D4D4D4;"></div>
<div class="r" style="left:0px;top:737px;width:25px;height:1px;background:#C8C8C8;"></div>
<div class="r" style="left:26px;top:757px;width:1392px;height:1px;background:#D4D4D4;"></div>
<div class="r" style="left:0px;top:757px;width:25px;height:1px;background:#C8C8C8;"></div>
<div class="r" style="left:26px;top:777px;width:1392px;height:1px;background:#D4D4D4;"></div>
<div class="r" style="left:0px;top:777px;width:25px;height:1px;background:#C8C8C8;"></div>
<div class="r" style="left:26px;top:797px;width:1392px;height:1px;background:#D4D4D4;"></div>
<div class="r" style="left:0px;top:797px;width:25px;height:1px;background:#C8C8C8;"></div>
<div class="r" style="left:89px;top:218px;width:1px;height:592px;background:#D4D4D4;"></div>
<div class="r" style="left:152px;top:218px;width:1px;height:592px;background:#D4D4D4;"></div>
<div class="r" style="left:230px;top:218px;width:1px;height:592px;background:#D4D4D4;"></div>
<div class="r" style="left:353px;top:218px;width:1px;height:592px;background:#D4D4D4;"></div>
<div class="r" style="left:458px;top:218px;width:1px;height:592px;background:#D4D4D4;"></div>
<div class="r" style="left:587px;top:218px;width:1px;height:592px;background:#D4D4D4;"></div>
<div class="r" style="left:706px;top:218px;width:1px;height:592px;background:#D4D4D4;"></div>
<div class="r" style="left:783px;top:218px;width:1px;height:592px;background:#D4D4D4;"></div>
<div class="r" style="left:911px;top:218px;width:1px;height:592px;background:#D4D4D4;"></div>
<div class="r" style="left:1021px;top:218px;width:1px;height:592px;background:#D4D4D4;"></div>
<div class="r" style="left:1098px;top:218px;width:1px;height:592px;background:#D4D4D4;"></div>
<div class="r" style="left:1182px;top:218px;width:1px;height:592px;background:#D4D4D4;"></div>
<div class="r" style="left:1309px;top:218px;width:1px;height:592px;background:#D4D4D4;"></div>
<div class="r" style="left:1373px;top:218px;width:1px;height:592px;background:#D4D4D4;"></div>
<div class="r" style="left:0px;top:235px;width:25px;height:1px;background:#B4B4B4;"></div>
<div class="r" style="left:0px;top:236px;width:25px;height:3px;background:#EAEAEA;"></div>
<div class="r" style="left:0px;top:239px;width:25px;height:1px;background:#B4B4B4;"></div>
<div class="t" style="left:-187px;width:400px;text-align:center;top:222px;font-size:12px;line-height:14px;color:#222;">22</div>
<div class="t" style="left:-187px;width:400px;text-align:center;top:242px;font-size:12px;line-height:14px;color:#222;">24</div>
<div class="t" style="left:-187px;width:400px;text-align:center;top:262px;font-size:12px;line-height:14px;color:#222;">25</div>
<div class="t" style="left:-187px;width:400px;text-align:center;top:282px;font-size:12px;line-height:14px;color:#222;">26</div>
<div class="t" style="left:-187px;width:400px;text-align:center;top:302px;font-size:12px;line-height:14px;color:#222;">27</div>
<div class="t" style="left:-187px;width:400px;text-align:center;top:322px;font-size:12px;line-height:14px;color:#222;">28</div>
<div class="t" style="left:-187px;width:400px;text-align:center;top:342px;font-size:12px;line-height:14px;color:#222;">29</div>
<div class="t" style="left:-187px;width:400px;text-align:center;top:362px;font-size:12px;line-height:14px;color:#222;">30</div>
<div class="t" style="left:-187px;width:400px;text-align:center;top:382px;font-size:12px;line-height:14px;color:#222;">31</div>
<div class="t" style="left:-187px;width:400px;text-align:center;top:402px;font-size:12px;line-height:14px;color:#222;">32</div>
<div class="t" style="left:-187px;width:400px;text-align:center;top:422px;font-size:12px;line-height:14px;color:#222;">33</div>
<div class="t" style="left:-187px;width:400px;text-align:center;top:442px;font-size:12px;line-height:14px;color:#222;">34</div>
<div class="t" style="left:-187px;width:400px;text-align:center;top:462px;font-size:12px;line-height:14px;color:#222;">35</div>
<div class="t" style="left:-187px;width:400px;text-align:center;top:482px;font-size:12px;line-height:14px;color:#222;">36</div>
<div class="t" style="left:-187px;width:400px;text-align:center;top:502px;font-size:12px;line-height:14px;color:#222;">37</div>
<div class="t" style="left:-187px;width:400px;text-align:center;top:522px;font-size:12px;line-height:14px;color:#222;">38</div>
<div class="t" style="left:-187px;width:400px;text-align:center;top:542px;font-size:12px;line-height:14px;color:#222;">39</div>
<div class="t" style="left:-187px;width:400px;text-align:center;top:562px;font-size:12px;line-height:14px;color:#222;">40</div>
<div class="t" style="left:-187px;width:400px;text-align:center;top:582px;font-size:12px;line-height:14px;color:#222;">41</div>
<div class="t" style="left:-187px;width:400px;text-align:center;top:602px;font-size:12px;line-height:14px;color:#222;">42</div>
<div class="t" style="left:-187px;width:400px;text-align:center;top:622px;font-size:12px;line-height:14px;color:#222;">43</div>
<div class="t" style="left:-187px;width:400px;text-align:center;top:642px;font-size:12px;line-height:14px;color:#222;">44</div>
<div class="t" style="left:-187px;width:400px;text-align:center;top:662px;font-size:12px;line-height:14px;color:#222;">45</div>
<div class="t" style="left:-187px;width:400px;text-align:center;top:682px;font-size:12px;line-height:14px;color:#222;">46</div>
<div class="t" style="left:-187px;width:400px;text-align:center;top:702px;font-size:12px;line-height:14px;color:#222;">47</div>
<div class="t" style="left:-187px;width:400px;text-align:center;top:722px;font-size:12px;line-height:14px;color:#222;">48</div>
<div class="t" style="left:-187px;width:400px;text-align:center;top:742px;font-size:12px;line-height:14px;color:#222;">49</div>
<div class="t" style="left:-187px;width:400px;text-align:center;top:762px;font-size:12px;line-height:14px;color:#222;">50</div>
<div class="t" style="left:-187px;width:400px;text-align:center;top:782px;font-size:12px;line-height:14px;color:#222;">51</div>
<div class="t" style="left:-187px;width:400px;text-align:center;top:802px;font-size:12px;line-height:14px;color:#222;">52</div>
<div class="r" style="left:152px;top:218px;width:1157px;height:592px;background:#fff;"></div>
<div class="r" style="left:153px;top:218px;width:200px;height:19px;background:#00B050;"></div>
<div class="r" style="left:353px;top:218px;width:430px;height:19px;background:#002060;"></div>
<div class="r" style="left:783px;top:218px;width:399px;height:19px;background:#375623;"></div>
<div class="r" style="left:1182px;top:218px;width:127px;height:19px;background:#C55A11;"></div>
<div class="r" style="left:153px;top:238px;width:77px;height:19px;background:#B4C6E7;"></div>
<div class="r" style="left:231px;top:238px;width:122px;height:19px;background:#B4C6E7;"></div>
<div class="r" style="left:354px;top:238px;width:104px;height:19px;background:#B4C6E7;"></div>
<div class="r" style="left:459px;top:238px;width:128px;height:19px;background:#B4C6E7;"></div>
<div class="r" style="left:588px;top:238px;width:118px;height:19px;background:#B4C6E7;"></div>
<div class="r" style="left:707px;top:238px;width:76px;height:19px;background:#B4C6E7;"></div>
<div class="r" style="left:784px;top:238px;width:127px;height:19px;background:#B4C6E7;"></div>
<div class="r" style="left:912px;top:238px;width:109px;height:19px;background:#B4C6E7;"></div>
<div class="r" style="left:1022px;top:238px;width:76px;height:19px;background:#B4C6E7;"></div>
<div class="r" style="left:1099px;top:238px;width:83px;height:19px;background:#B4C6E7;"></div>
<div class="r" style="left:1183px;top:238px;width:126px;height:19px;background:#B4C6E7;"></div>
<div class="r" style="left:153px;top:258px;width:77px;height:19px;background:#D9E1F2;"></div>
<div class="r" style="left:231px;top:258px;width:122px;height:19px;background:#D9E1F2;"></div>
<div class="r" style="left:354px;top:258px;width:104px;height:19px;background:#D9E1F2;"></div>
<div class="r" style="left:459px;top:258px;width:128px;height:19px;background:#D9E1F2;"></div>
<div class="r" style="left:588px;top:258px;width:118px;height:19px;background:#D9E1F2;"></div>
<div class="r" style="left:707px;top:258px;width:76px;height:19px;background:#D9E1F2;"></div>
<div class="r" style="left:784px;top:258px;width:127px;height:19px;background:#D9E1F2;"></div>
<div class="r" style="left:912px;top:258px;width:109px;height:19px;background:#D9E1F2;"></div>
<div class="r" style="left:1022px;top:258px;width:76px;height:19px;background:#D9E1F2;"></div>
<div class="r" style="left:1099px;top:258px;width:83px;height:19px;background:#D9E1F2;"></div>
<div class="r" style="left:1183px;top:258px;width:126px;height:19px;background:#D9E1F2;"></div>
<div class="r" style="left:153px;top:278px;width:77px;height:19px;background:#B4C6E7;"></div>
<div class="r" style="left:231px;top:278px;width:122px;height:19px;background:#B4C6E7;"></div>
<div class="r" style="left:354px;top:278px;width:104px;height:19px;background:#B4C6E7;"></div>
<div class="r" style="left:459px;top:278px;width:128px;height:19px;background:#B4C6E7;"></div>
<div class="r" style="left:588px;top:278px;width:118px;height:19px;background:#B4C6E7;"></div>
<div class="r" style="left:707px;top:278px;width:76px;height:19px;background:#B4C6E7;"></div>
<div class="r" style="left:784px;top:278px;width:127px;height:19px;background:#B4C6E7;"></div>
<div class="r" style="left:912px;top:278px;width:109px;height:19px;background:#B4C6E7;"></div>
<div class="r" style="left:1022px;top:278px;width:76px;height:19px;background:#B4C6E7;"></div>
<div class="r" style="left:1099px;top:278px;width:83px;height:19px;background:#B4C6E7;"></div>
<div class="r" style="left:1183px;top:278px;width:126px;height:19px;background:#B4C6E7;"></div>
<div class="r" style="left:153px;top:298px;width:77px;height:19px;background:#D9E1F2;"></div>
<div class="r" style="left:231px;top:298px;width:122px;height:19px;background:#D9E1F2;"></div>
<div class="r" style="left:354px;top:298px;width:104px;height:19px;background:#D9E1F2;"></div>
<div class="r" style="left:459px;top:298px;width:128px;height:19px;background:#D9E1F2;"></div>
<div class="r" style="left:588px;top:298px;width:118px;height:19px;background:#D9E1F2;"></div>
<div class="r" style="left:707px;top:298px;width:76px;height:19px;background:#D9E1F2;"></div>
<div class="r" style="left:784px;top:298px;width:127px;height:19px;background:#D9E1F2;"></div>
<div class="r" style="left:912px;top:298px;width:109px;height:19px;background:#D9E1F2;"></div>
<div class="r" style="left:1022px;top:298px;width:76px;height:19px;background:#D9E1F2;"></div>
<div class="r" style="left:1099px;top:298px;width:83px;height:19px;background:#D9E1F2;"></div>
<div class="r" style="left:1183px;top:298px;width:126px;height:19px;background:#D9E1F2;"></div>
<div class="r" style="left:153px;top:318px;width:77px;height:19px;background:#B4C6E7;"></div>
<div class="r" style="left:231px;top:318px;width:122px;height:19px;background:#B4C6E7;"></div>
<div class="r" style="left:354px;top:318px;width:104px;height:19px;background:#B4C6E7;"></div>
<div class="r" style="left:459px;top:318px;width:128px;height:19px;background:#B4C6E7;"></div>
<div class="r" style="left:588px;top:318px;width:118px;height:19px;background:#B4C6E7;"></div>
<div class="r" style="left:707px;top:318px;width:76px;height:19px;background:#B4C6E7;"></div>
<div class="r" style="left:784px;top:318px;width:127px;height:19px;background:#B4C6E7;"></div>
<div class="r" style="left:912px;top:318px;width:109px;height:19px;background:#B4C6E7;"></div>
<div class="r" style="left:1022px;top:318px;width:76px;height:19px;background:#B4C6E7;"></div>
<div class="r" style="left:1099px;top:318px;width:83px;height:19px;background:#B4C6E7;"></div>
<div class="r" style="left:1183px;top:318px;width:126px;height:19px;background:#B4C6E7;"></div>
<div class="r" style="left:153px;top:338px;width:77px;height:19px;background:#D9E1F2;"></div>
<div class="r" style="left:231px;top:338px;width:122px;height:19px;background:#D9E1F2;"></div>
<div class="r" style="left:354px;top:338px;width:104px;height:19px;background:#D9E1F2;"></div>
<div class="r" style="left:459px;top:338px;width:128px;height:19px;background:#D9E1F2;"></div>
<div class="r" style="left:588px;top:338px;width:118px;height:19px;background:#D9E1F2;"></div>
<div class="r" style="left:707px;top:338px;width:76px;height:19px;background:#D9E1F2;"></div>
<div class="r" style="left:784px;top:338px;width:127px;height:19px;background:#D9E1F2;"></div>
<div class="r" style="left:912px;top:338px;width:109px;height:19px;background:#D9E1F2;"></div>
<div class="r" style="left:1022px;top:338px;width:76px;height:19px;background:#D9E1F2;"></div>
<div class="r" style="left:1099px;top:338px;width:83px;height:19px;background:#D9E1F2;"></div>
<div class="r" style="left:1183px;top:338px;width:126px;height:19px;background:#D9E1F2;"></div>
<div class="r" style="left:153px;top:358px;width:77px;height:19px;background:#B4C6E7;"></div>
<div class="r" style="left:231px;top:358px;width:122px;height:19px;background:#B4C6E7;"></div>
<div class="r" style="left:354px;top:358px;width:104px;height:19px;background:#B4C6E7;"></div>
<div class="r" style="left:459px;top:358px;width:128px;height:19px;background:#B4C6E7;"></div>
<div class="r" style="left:588px;top:358px;width:118px;height:19px;background:#B4C6E7;"></div>
<div class="r" style="left:707px;top:358px;width:76px;height:19px;background:#B4C6E7;"></div>
<div class="r" style="left:784px;top:358px;width:127px;height:19px;background:#B4C6E7;"></div>
<div class="r" style="left:912px;top:358px;width:109px;height:19px;background:#B4C6E7;"></div>
<div class="r" style="left:1022px;top:358px;width:76px;height:19px;background:#B4C6E7;"></div>
<div class="r" style="left:1099px;top:358px;width:83px;height:19px;background:#B4C6E7;"></div>
<div class="r" style="left:1183px;top:358px;width:126px;height:19px;background:#B4C6E7;"></div>
<div class="r" style="left:153px;top:378px;width:77px;height:19px;background:#D9E1F2;"></div>
<div class="r" style="left:231px;top:378px;width:122px;height:19px;background:#D9E1F2;"></div>
<div class="r" style="left:354px;top:378px;width:104px;height:19px;background:#D9E1F2;"></div>
<div class="r" style="left:459px;top:378px;width:128px;height:19px;background:#D9E1F2;"></div>
<div class="r" style="left:588px;top:378px;width:118px;height:19px;background:#D9E1F2;"></div>
<div class="r" style="left:707px;top:378px;width:76px;height:19px;background:#D9E1F2;"></div>
<div class="r" style="left:784px;top:378px;width:127px;height:19px;background:#D9E1F2;"></div>
<div class="r" style="left:912px;top:378px;width:109px;height:19px;background:#D9E1F2;"></div>
<div class="r" style="left:1022px;top:378px;width:76px;height:19px;background:#D9E1F2;"></div>
<div class="r" style="left:1099px;top:378px;width:83px;height:19px;background:#D9E1F2;"></div>
<div class="r" style="left:1183px;top:378px;width:126px;height:19px;background:#D9E1F2;"></div>
<div class="r" style="left:153px;top:398px;width:77px;height:19px;background:#B4C6E7;"></div>
<div class="r" style="left:231px;top:398px;width:122px;height:19px;background:#B4C6E7;"></div>
<div class="r" style="left:354px;top:398px;width:104px;height:19px;background:#B4C6E7;"></div>
<div class="r" style="left:459px;top:398px;width:128px;height:19px;background:#B4C6E7;"></div>
<div class="r" style="left:588px;top:398px;width:118px;height:19px;background:#B4C6E7;"></div>
<div class="r" style="left:707px;top:398px;width:76px;height:19px;background:#B4C6E7;"></div>
<div class="r" style="left:784px;top:398px;width:127px;height:19px;background:#B4C6E7;"></div>
<div class="r" style="left:912px;top:398px;width:109px;height:19px;background:#B4C6E7;"></div>
<div class="r" style="left:1022px;top:398px;width:76px;height:19px;background:#B4C6E7;"></div>
<div class="r" style="left:1099px;top:398px;width:83px;height:19px;background:#B4C6E7;"></div>
<div class="r" style="left:1183px;top:398px;width:126px;height:19px;background:#B4C6E7;"></div>
<div class="r" style="left:153px;top:418px;width:77px;height:19px;background:#D9E1F2;"></div>
<div class="r" style="left:231px;top:418px;width:122px;height:19px;background:#D9E1F2;"></div>
<div class="r" style="left:354px;top:418px;width:104px;height:19px;background:#D9E1F2;"></div>
<div class="r" style="left:459px;top:418px;width:128px;height:19px;background:#D9E1F2;"></div>
<div class="r" style="left:588px;top:418px;width:118px;height:19px;background:#D9E1F2;"></div>
<div class="r" style="left:707px;top:418px;width:76px;height:19px;background:#D9E1F2;"></div>
<div class="r" style="left:784px;top:418px;width:127px;height:19px;background:#D9E1F2;"></div>
<div class="r" style="left:912px;top:418px;width:109px;height:19px;background:#D9E1F2;"></div>
<div class="r" style="left:1022px;top:418px;width:76px;height:19px;background:#D9E1F2;"></div>
<div class="r" style="left:1099px;top:418px;width:83px;height:19px;background:#D9E1F2;"></div>
<div class="r" style="left:1183px;top:418px;width:126px;height:19px;background:#D9E1F2;"></div>
<div class="r" style="left:153px;top:438px;width:77px;height:19px;background:#B4C6E7;"></div>
<div class="r" style="left:231px;top:438px;width:122px;height:19px;background:#B4C6E7;"></div>
<div class="r" style="left:354px;top:438px;width:104px;height:19px;background:#B4C6E7;"></div>
<div class="r" style="left:459px;top:438px;width:128px;height:19px;background:#B4C6E7;"></div>
<div class="r" style="left:588px;top:438px;width:118px;height:19px;background:#B4C6E7;"></div>
<div class="r" style="left:707px;top:438px;width:76px;height:19px;background:#B4C6E7;"></div>
<div class="r" style="left:784px;top:438px;width:127px;height:19px;background:#B4C6E7;"></div>
<div class="r" style="left:912px;top:438px;width:109px;height:19px;background:#B4C6E7;"></div>
<div class="r" style="left:1022px;top:438px;width:76px;height:19px;background:#B4C6E7;"></div>
<div class="r" style="left:1099px;top:438px;width:83px;height:19px;background:#B4C6E7;"></div>
<div class="r" style="left:1183px;top:438px;width:126px;height:19px;background:#B4C6E7;"></div>
<div class="r" style="left:153px;top:458px;width:77px;height:19px;background:#D9E1F2;"></div>
<div class="r" style="left:231px;top:458px;width:122px;height:19px;background:#D9E1F2;"></div>
<div class="r" style="left:354px;top:458px;width:104px;height:19px;background:#D9E1F2;"></div>
<div class="r" style="left:459px;top:458px;width:128px;height:19px;background:#D9E1F2;"></div>
<div class="r" style="left:588px;top:458px;width:118px;height:19px;background:#D9E1F2;"></div>
<div class="r" style="left:707px;top:458px;width:76px;height:19px;background:#D9E1F2;"></div>
<div class="r" style="left:784px;top:458px;width:127px;height:19px;background:#D9E1F2;"></div>
<div class="r" style="left:912px;top:458px;width:109px;height:19px;background:#D9E1F2;"></div>
<div class="r" style="left:1022px;top:458px;width:76px;height:19px;background:#D9E1F2;"></div>
<div class="r" style="left:1099px;top:458px;width:83px;height:19px;background:#D9E1F2;"></div>
<div class="r" style="left:1183px;top:458px;width:126px;height:19px;background:#D9E1F2;"></div>
<div class="r" style="left:153px;top:478px;width:77px;height:19px;background:#B4C6E7;"></div>
<div class="r" style="left:231px;top:478px;width:122px;height:19px;background:#B4C6E7;"></div>
<div class="r" style="left:354px;top:478px;width:104px;height:19px;background:#B4C6E7;"></div>
<div class="r" style="left:459px;top:478px;width:128px;height:19px;background:#B4C6E7;"></div>
<div class="r" style="left:588px;top:478px;width:118px;height:19px;background:#B4C6E7;"></div>
<div class="r" style="left:707px;top:478px;width:76px;height:19px;background:#B4C6E7;"></div>
<div class="r" style="left:784px;top:478px;width:127px;height:19px;background:#B4C6E7;"></div>
<div class="r" style="left:912px;top:478px;width:109px;height:19px;background:#B4C6E7;"></div>
<div class="r" style="left:1022px;top:478px;width:76px;height:19px;background:#B4C6E7;"></div>
<div class="r" style="left:1099px;top:478px;width:83px;height:19px;background:#B4C6E7;"></div>
<div class="r" style="left:1183px;top:478px;width:126px;height:19px;background:#B4C6E7;"></div>
<div class="r" style="left:153px;top:498px;width:77px;height:19px;background:#D9E1F2;"></div>
<div class="r" style="left:231px;top:498px;width:122px;height:19px;background:#D9E1F2;"></div>
<div class="r" style="left:354px;top:498px;width:104px;height:19px;background:#D9E1F2;"></div>
<div class="r" style="left:459px;top:498px;width:128px;height:19px;background:#D9E1F2;"></div>
<div class="r" style="left:588px;top:498px;width:118px;height:19px;background:#D9E1F2;"></div>
<div class="r" style="left:707px;top:498px;width:76px;height:19px;background:#D9E1F2;"></div>
<div class="r" style="left:784px;top:498px;width:127px;height:19px;background:#D9E1F2;"></div>
<div class="r" style="left:912px;top:498px;width:109px;height:19px;background:#D9E1F2;"></div>
<div class="r" style="left:1022px;top:498px;width:76px;height:19px;background:#D9E1F2;"></div>
<div class="r" style="left:1099px;top:498px;width:83px;height:19px;background:#D9E1F2;"></div>
<div class="r" style="left:1183px;top:498px;width:126px;height:19px;background:#D9E1F2;"></div>
<div class="r" style="left:153px;top:518px;width:77px;height:19px;background:#B4C6E7;"></div>
<div class="r" style="left:231px;top:518px;width:122px;height:19px;background:#B4C6E7;"></div>
<div class="r" style="left:354px;top:518px;width:104px;height:19px;background:#B4C6E7;"></div>
<div class="r" style="left:459px;top:518px;width:128px;height:19px;background:#B4C6E7;"></div>
<div class="r" style="left:588px;top:518px;width:118px;height:19px;background:#B4C6E7;"></div>
<div class="r" style="left:707px;top:518px;width:76px;height:19px;background:#B4C6E7;"></div>
<div class="r" style="left:784px;top:518px;width:127px;height:19px;background:#B4C6E7;"></div>
<div class="r" style="left:912px;top:518px;width:109px;height:19px;background:#B4C6E7;"></div>
<div class="r" style="left:1022px;top:518px;width:76px;height:19px;background:#B4C6E7;"></div>
<div class="r" style="left:1099px;top:518px;width:83px;height:19px;background:#B4C6E7;"></div>
<div class="r" style="left:1183px;top:518px;width:126px;height:19px;background:#B4C6E7;"></div>
<div class="r" style="left:153px;top:538px;width:77px;height:19px;background:#D9E1F2;"></div>
<div class="r" style="left:231px;top:538px;width:122px;height:19px;background:#D9E1F2;"></div>
<div class="r" style="left:354px;top:538px;width:104px;height:19px;background:#D9E1F2;"></div>
<div class="r" style="left:459px;top:538px;width:128px;height:19px;background:#D9E1F2;"></div>
<div class="r" style="left:588px;top:538px;width:118px;height:19px;background:#D9E1F2;"></div>
<div class="r" style="left:707px;top:538px;width:76px;height:19px;background:#D9E1F2;"></div>
<div class="r" style="left:784px;top:538px;width:127px;height:19px;background:#D9E1F2;"></div>
<div class="r" style="left:912px;top:538px;width:109px;height:19px;background:#D9E1F2;"></div>
<div class="r" style="left:1022px;top:538px;width:76px;height:19px;background:#D9E1F2;"></div>
<div class="r" style="left:1099px;top:538px;width:83px;height:19px;background:#D9E1F2;"></div>
<div class="r" style="left:1183px;top:538px;width:126px;height:19px;background:#D9E1F2;"></div>
<div class="r" style="left:153px;top:558px;width:77px;height:19px;background:#B4C6E7;"></div>
<div class="r" style="left:231px;top:558px;width:122px;height:19px;background:#B4C6E7;"></div>
<div class="r" style="left:354px;top:558px;width:104px;height:19px;background:#B4C6E7;"></div>
<div class="r" style="left:459px;top:558px;width:128px;height:19px;background:#B4C6E7;"></div>
<div class="r" style="left:588px;top:558px;width:118px;height:19px;background:#B4C6E7;"></div>
<div class="r" style="left:707px;top:558px;width:76px;height:19px;background:#B4C6E7;"></div>
<div class="r" style="left:784px;top:558px;width:127px;height:19px;background:#B4C6E7;"></div>
<div class="r" style="left:912px;top:558px;width:109px;height:19px;background:#B4C6E7;"></div>
<div class="r" style="left:1022px;top:558px;width:76px;height:19px;background:#B4C6E7;"></div>
<div class="r" style="left:1099px;top:558px;width:83px;height:19px;background:#B4C6E7;"></div>
<div class="r" style="left:1183px;top:558px;width:126px;height:19px;background:#B4C6E7;"></div>
<div class="r" style="left:153px;top:578px;width:77px;height:19px;background:#D9E1F2;"></div>
<div class="r" style="left:231px;top:578px;width:122px;height:19px;background:#D9E1F2;"></div>
<div class="r" style="left:354px;top:578px;width:104px;height:19px;background:#D9E1F2;"></div>
<div class="r" style="left:459px;top:578px;width:128px;height:19px;background:#D9E1F2;"></div>
<div class="r" style="left:588px;top:578px;width:118px;height:19px;background:#D9E1F2;"></div>
<div class="r" style="left:707px;top:578px;width:76px;height:19px;background:#D9E1F2;"></div>
<div class="r" style="left:784px;top:578px;width:127px;height:19px;background:#D9E1F2;"></div>
<div class="r" style="left:912px;top:578px;width:109px;height:19px;background:#D9E1F2;"></div>
<div class="r" style="left:1022px;top:578px;width:76px;height:19px;background:#D9E1F2;"></div>
<div class="r" style="left:1099px;top:578px;width:83px;height:19px;background:#D9E1F2;"></div>
<div class="r" style="left:1183px;top:578px;width:126px;height:19px;background:#D9E1F2;"></div>
<div class="r" style="left:153px;top:598px;width:77px;height:19px;background:#B4C6E7;"></div>
<div class="r" style="left:231px;top:598px;width:122px;height:19px;background:#B4C6E7;"></div>
<div class="r" style="left:354px;top:598px;width:104px;height:19px;background:#B4C6E7;"></div>
<div class="r" style="left:459px;top:598px;width:128px;height:19px;background:#B4C6E7;"></div>
<div class="r" style="left:588px;top:598px;width:118px;height:19px;background:#B4C6E7;"></div>
<div class="r" style="left:707px;top:598px;width:76px;height:19px;background:#B4C6E7;"></div>
<div class="r" style="left:784px;top:598px;width:127px;height:19px;background:#B4C6E7;"></div>
<div class="r" style="left:912px;top:598px;width:109px;height:19px;background:#B4C6E7;"></div>
<div class="r" style="left:1022px;top:598px;width:76px;height:19px;background:#B4C6E7;"></div>
<div class="r" style="left:1099px;top:598px;width:83px;height:19px;background:#B4C6E7;"></div>
<div class="r" style="left:1183px;top:598px;width:126px;height:19px;background:#B4C6E7;"></div>
<div class="r" style="left:153px;top:618px;width:77px;height:19px;background:#D9E1F2;"></div>
<div class="r" style="left:231px;top:618px;width:122px;height:19px;background:#D9E1F2;"></div>
<div class="r" style="left:354px;top:618px;width:104px;height:19px;background:#D9E1F2;"></div>
<div class="r" style="left:459px;top:618px;width:128px;height:19px;background:#D9E1F2;"></div>
<div class="r" style="left:588px;top:618px;width:118px;height:19px;background:#D9E1F2;"></div>
<div class="r" style="left:707px;top:618px;width:76px;height:19px;background:#D9E1F2;"></div>
<div class="r" style="left:784px;top:618px;width:127px;height:19px;background:#D9E1F2;"></div>
<div class="r" style="left:912px;top:618px;width:109px;height:19px;background:#D9E1F2;"></div>
<div class="r" style="left:1022px;top:618px;width:76px;height:19px;background:#D9E1F2;"></div>
<div class="r" style="left:1099px;top:618px;width:83px;height:19px;background:#D9E1F2;"></div>
<div class="r" style="left:1183px;top:618px;width:126px;height:19px;background:#D9E1F2;"></div>
<div class="r" style="left:153px;top:638px;width:77px;height:19px;background:#B4C6E7;"></div>
<div class="r" style="left:231px;top:638px;width:122px;height:19px;background:#B4C6E7;"></div>
<div class="r" style="left:354px;top:638px;width:104px;height:19px;background:#B4C6E7;"></div>
<div class="r" style="left:459px;top:638px;width:128px;height:19px;background:#B4C6E7;"></div>
<div class="r" style="left:588px;top:638px;width:118px;height:19px;background:#B4C6E7;"></div>
<div class="r" style="left:707px;top:638px;width:76px;height:19px;background:#B4C6E7;"></div>
<div class="r" style="left:784px;top:638px;width:127px;height:19px;background:#B4C6E7;"></div>
<div class="r" style="left:912px;top:638px;width:109px;height:19px;background:#B4C6E7;"></div>
<div class="r" style="left:1022px;top:638px;width:76px;height:19px;background:#B4C6E7;"></div>
<div class="r" style="left:1099px;top:638px;width:83px;height:19px;background:#B4C6E7;"></div>
<div class="r" style="left:1183px;top:638px;width:126px;height:19px;background:#B4C6E7;"></div>
<div class="r" style="left:153px;top:658px;width:77px;height:19px;background:#D9E1F2;"></div>
<div class="r" style="left:231px;top:658px;width:122px;height:19px;background:#D9E1F2;"></div>
<div class="r" style="left:354px;top:658px;width:104px;height:19px;background:#D9E1F2;"></div>
<div class="r" style="left:459px;top:658px;width:128px;height:19px;background:#D9E1F2;"></div>
<div class="r" style="left:588px;top:658px;width:118px;height:19px;background:#D9E1F2;"></div>
<div class="r" style="left:707px;top:658px;width:76px;height:19px;background:#D9E1F2;"></div>
<div class="r" style="left:784px;top:658px;width:127px;height:19px;background:#D9E1F2;"></div>
<div class="r" style="left:912px;top:658px;width:109px;height:19px;background:#D9E1F2;"></div>
<div class="r" style="left:1022px;top:658px;width:76px;height:19px;background:#D9E1F2;"></div>
<div class="r" style="left:1099px;top:658px;width:83px;height:19px;background:#D9E1F2;"></div>
<div class="r" style="left:1183px;top:658px;width:126px;height:19px;background:#D9E1F2;"></div>
<div class="r" style="left:153px;top:678px;width:77px;height:19px;background:#B4C6E7;"></div>
<div class="r" style="left:231px;top:678px;width:122px;height:19px;background:#B4C6E7;"></div>
<div class="r" style="left:354px;top:678px;width:104px;height:19px;background:#B4C6E7;"></div>
<div class="r" style="left:459px;top:678px;width:128px;height:19px;background:#B4C6E7;"></div>
<div class="r" style="left:588px;top:678px;width:118px;height:19px;background:#B4C6E7;"></div>
<div class="r" style="left:707px;top:678px;width:76px;height:19px;background:#B4C6E7;"></div>
<div class="r" style="left:784px;top:678px;width:127px;height:19px;background:#B4C6E7;"></div>
<div class="r" style="left:912px;top:678px;width:109px;height:19px;background:#B4C6E7;"></div>
<div class="r" style="left:1022px;top:678px;width:76px;height:19px;background:#B4C6E7;"></div>
<div class="r" style="left:1099px;top:678px;width:83px;height:19px;background:#B4C6E7;"></div>
<div class="r" style="left:1183px;top:678px;width:126px;height:19px;background:#B4C6E7;"></div>
<div class="r" style="left:153px;top:698px;width:77px;height:19px;background:#D9E1F2;"></div>
<div class="r" style="left:231px;top:698px;width:122px;height:19px;background:#D9E1F2;"></div>
<div class="r" style="left:354px;top:698px;width:104px;height:19px;background:#D9E1F2;"></div>
<div class="r" style="left:459px;top:698px;width:128px;height:19px;background:#D9E1F2;"></div>
<div class="r" style="left:588px;top:698px;width:118px;height:19px;background:#D9E1F2;"></div>
<div class="r" style="left:707px;top:698px;width:76px;height:19px;background:#D9E1F2;"></div>
<div class="r" style="left:784px;top:698px;width:127px;height:19px;background:#D9E1F2;"></div>
<div class="r" style="left:912px;top:698px;width:109px;height:19px;background:#D9E1F2;"></div>
<div class="r" style="left:1022px;top:698px;width:76px;height:19px;background:#D9E1F2;"></div>
<div class="r" style="left:1099px;top:698px;width:83px;height:19px;background:#D9E1F2;"></div>
<div class="r" style="left:1183px;top:698px;width:126px;height:19px;background:#D9E1F2;"></div>
<div class="r" style="left:153px;top:718px;width:77px;height:19px;background:#B4C6E7;"></div>
<div class="r" style="left:231px;top:718px;width:122px;height:19px;background:#B4C6E7;"></div>
<div class="r" style="left:354px;top:718px;width:104px;height:19px;background:#B4C6E7;"></div>
<div class="r" style="left:459px;top:718px;width:128px;height:19px;background:#B4C6E7;"></div>
<div class="r" style="left:588px;top:718px;width:118px;height:19px;background:#B4C6E7;"></div>
<div class="r" style="left:707px;top:718px;width:76px;height:19px;background:#B4C6E7;"></div>
<div class="r" style="left:784px;top:718px;width:127px;height:19px;background:#B4C6E7;"></div>
<div class="r" style="left:912px;top:718px;width:109px;height:19px;background:#B4C6E7;"></div>
<div class="r" style="left:1022px;top:718px;width:76px;height:19px;background:#B4C6E7;"></div>
<div class="r" style="left:1099px;top:718px;width:83px;height:19px;background:#B4C6E7;"></div>
<div class="r" style="left:1183px;top:718px;width:126px;height:19px;background:#B4C6E7;"></div>
<div class="r" style="left:153px;top:738px;width:77px;height:19px;background:#D9E1F2;"></div>
<div class="r" style="left:231px;top:738px;width:122px;height:19px;background:#D9E1F2;"></div>
<div class="r" style="left:354px;top:738px;width:104px;height:19px;background:#D9E1F2;"></div>
<div class="r" style="left:459px;top:738px;width:128px;height:19px;background:#D9E1F2;"></div>
<div class="r" style="left:588px;top:738px;width:118px;height:19px;background:#D9E1F2;"></div>
<div class="r" style="left:707px;top:738px;width:76px;height:19px;background:#D9E1F2;"></div>
<div class="r" style="left:784px;top:738px;width:127px;height:19px;background:#D9E1F2;"></div>
<div class="r" style="left:912px;top:738px;width:109px;height:19px;background:#D9E1F2;"></div>
<div class="r" style="left:1022px;top:738px;width:76px;height:19px;background:#D9E1F2;"></div>
<div class="r" style="left:1099px;top:738px;width:83px;height:19px;background:#D9E1F2;"></div>
<div class="r" style="left:1183px;top:738px;width:126px;height:19px;background:#D9E1F2;"></div>
<div class="r" style="left:153px;top:758px;width:77px;height:19px;background:#B4C6E7;"></div>
<div class="r" style="left:231px;top:758px;width:122px;height:19px;background:#B4C6E7;"></div>
<div class="r" style="left:354px;top:758px;width:104px;height:19px;background:#B4C6E7;"></div>
<div class="r" style="left:459px;top:758px;width:128px;height:19px;background:#B4C6E7;"></div>
<div class="r" style="left:588px;top:758px;width:118px;height:19px;background:#B4C6E7;"></div>
<div class="r" style="left:707px;top:758px;width:76px;height:19px;background:#B4C6E7;"></div>
<div class="r" style="left:784px;top:758px;width:127px;height:19px;background:#B4C6E7;"></div>
<div class="r" style="left:912px;top:758px;width:109px;height:19px;background:#B4C6E7;"></div>
<div class="r" style="left:1022px;top:758px;width:76px;height:19px;background:#B4C6E7;"></div>
<div class="r" style="left:1099px;top:758px;width:83px;height:19px;background:#B4C6E7;"></div>
<div class="r" style="left:1183px;top:758px;width:126px;height:19px;background:#B4C6E7;"></div>
<div class="r" style="left:153px;top:778px;width:77px;height:19px;background:#D9E1F2;"></div>
<div class="r" style="left:231px;top:778px;width:122px;height:19px;background:#D9E1F2;"></div>
<div class="r" style="left:354px;top:778px;width:104px;height:19px;background:#D9E1F2;"></div>
<div class="r" style="left:459px;top:778px;width:128px;height:19px;background:#D9E1F2;"></div>
<div class="r" style="left:588px;top:778px;width:118px;height:19px;background:#D9E1F2;"></div>
<div class="r" style="left:707px;top:778px;width:76px;height:19px;background:#D9E1F2;"></div>
<div class="r" style="left:784px;top:778px;width:127px;height:19px;background:#D9E1F2;"></div>
<div class="r" style="left:912px;top:778px;width:109px;height:19px;background:#D9E1F2;"></div>
<div class="r" style="left:1022px;top:778px;width:76px;height:19px;background:#D9E1F2;"></div>
<div class="r" style="left:1099px;top:778px;width:83px;height:19px;background:#D9E1F2;"></div>
<div class="r" style="left:1183px;top:778px;width:126px;height:19px;background:#D9E1F2;"></div>
<div class="r" style="left:153px;top:798px;width:77px;height:12px;background:#B4C6E7;"></div>
<div class="r" style="left:231px;top:798px;width:122px;height:12px;background:#B4C6E7;"></div>
<div class="r" style="left:354px;top:798px;width:104px;height:12px;background:#B4C6E7;"></div>
<div class="r" style="left:459px;top:798px;width:128px;height:12px;background:#B4C6E7;"></div>
<div class="r" style="left:588px;top:798px;width:118px;height:12px;background:#B4C6E7;"></div>
<div class="r" style="left:707px;top:798px;width:76px;height:12px;background:#B4C6E7;"></div>
<div class="r" style="left:784px;top:798px;width:127px;height:12px;background:#B4C6E7;"></div>
<div class="r" style="left:912px;top:798px;width:109px;height:12px;background:#B4C6E7;"></div>
<div class="r" style="left:1022px;top:798px;width:76px;height:12px;background:#B4C6E7;"></div>
<div class="r" style="left:1099px;top:798px;width:83px;height:12px;background:#B4C6E7;"></div>
<div class="r" style="left:1183px;top:798px;width:126px;height:12px;background:#B4C6E7;"></div>
<div class="t" style="left:156px;top:222px;font-size:12px;line-height:14px;color:#fff;">STUDENT DETAILS</div>
<div class="t" style="left:368.0px;width:400px;text-align:center;top:222px;font-size:12px;line-height:14px;color:#fff;">SEMESTER 1</div>
<div class="t" style="left:782.5px;width:400px;text-align:center;top:222px;font-size:12px;line-height:14px;color:#fff;">SEMESTER 2</div>
<div class="t" style="left:1185px;top:222px;font-size:12px;line-height:14px;color:#fff;">LECTURER COMMNT</div>
<div class="t" style="left:156px;top:242px;font-size:12px;line-height:14px;color:#000;">N0_</div>
<div class="t" style="left:233px;top:242px;font-size:12px;line-height:14px;color:#000;">STUDENT NUMBER</div>
<div class="t" style="left:356px;top:242px;font-size:12px;line-height:14px;color:#000;">ASSIGNMENT 1</div>
<div class="t" style="left:461px;top:242px;font-size:12px;line-height:14px;color:#000;">ASSIGNMENT 2</div>
<div class="t" style="left:590px;top:242px;font-size:12px;line-height:14px;color:#000;">TEST 1</div>
<div class="t" style="left:709px;top:242px;font-size:12px;line-height:14px;color:#000;">TEST 2</div>
<div class="t" style="left:786px;top:242px;font-size:12px;line-height:14px;color:#000;">ASSIGNMENT 1</div>
<div class="t" style="left:914px;top:242px;font-size:12px;line-height:14px;color:#000;">ASSIGNMENT 2</div>
<div class="t" style="left:1024px;top:242px;font-size:12px;line-height:14px;color:#000;">TEST 1</div>
<div class="t" style="left:1101px;top:242px;font-size:12px;line-height:14px;color:#000;">TEST 2</div>
<div class="r" style="left:0;top:218px;width:1418px;height:592px;overflow:hidden;">
<div class="t" style="left:-172px;width:400px;text-align:right;top:44px;font-size:12px;line-height:14px;color:#000;">1</div>
<div class="t" style="left:-172px;width:400px;text-align:right;top:64px;font-size:12px;line-height:14px;color:#000;">2</div>
<div class="t" style="left:-172px;width:400px;text-align:right;top:84px;font-size:12px;line-height:14px;color:#000;">3</div>
<div class="t" style="left:-172px;width:400px;text-align:right;top:104px;font-size:12px;line-height:14px;color:#000;">4</div>
<div class="t" style="left:-172px;width:400px;text-align:right;top:124px;font-size:12px;line-height:14px;color:#000;">5</div>
<div class="t" style="left:-172px;width:400px;text-align:right;top:144px;font-size:12px;line-height:14px;color:#000;">6</div>
<div class="t" style="left:-172px;width:400px;text-align:right;top:164px;font-size:12px;line-height:14px;color:#000;">7</div>
<div class="t" style="left:-172px;width:400px;text-align:right;top:184px;font-size:12px;line-height:14px;color:#000;">8</div>
<div class="t" style="left:-172px;width:400px;text-align:right;top:204px;font-size:12px;line-height:14px;color:#000;">9</div>
<div class="t" style="left:-172px;width:400px;text-align:right;top:224px;font-size:12px;line-height:14px;color:#000;">10</div>
<div class="t" style="left:-172px;width:400px;text-align:right;top:244px;font-size:12px;line-height:14px;color:#000;">11</div>
<div class="t" style="left:-172px;width:400px;text-align:right;top:264px;font-size:12px;line-height:14px;color:#000;">12</div>
<div class="t" style="left:-172px;width:400px;text-align:right;top:284px;font-size:12px;line-height:14px;color:#000;">13</div>
<div class="t" style="left:-172px;width:400px;text-align:right;top:304px;font-size:12px;line-height:14px;color:#000;">14</div>
<div class="t" style="left:-172px;width:400px;text-align:right;top:324px;font-size:12px;line-height:14px;color:#000;">15</div>
<div class="t" style="left:-172px;width:400px;text-align:right;top:344px;font-size:12px;line-height:14px;color:#000;">16</div>
<div class="t" style="left:-172px;width:400px;text-align:right;top:364px;font-size:12px;line-height:14px;color:#000;">17</div>
<div class="t" style="left:-172px;width:400px;text-align:right;top:384px;font-size:12px;line-height:14px;color:#000;">18</div>
<div class="t" style="left:-172px;width:400px;text-align:right;top:404px;font-size:12px;line-height:14px;color:#000;">19</div>
<div class="t" style="left:-172px;width:400px;text-align:right;top:424px;font-size:12px;line-height:14px;color:#000;">20</div>
<div class="t" style="left:-172px;width:400px;text-align:right;top:444px;font-size:12px;line-height:14px;color:#000;">21</div>
<div class="t" style="left:-172px;width:400px;text-align:right;top:464px;font-size:12px;line-height:14px;color:#000;">22</div>
<div class="t" style="left:-172px;width:400px;text-align:right;top:484px;font-size:12px;line-height:14px;color:#000;">23</div>
<div class="t" style="left:-172px;width:400px;text-align:right;top:504px;font-size:12px;line-height:14px;color:#000;">24</div>
<div class="t" style="left:-172px;width:400px;text-align:right;top:524px;font-size:12px;line-height:14px;color:#000;">25</div>
<div class="t" style="left:-172px;width:400px;text-align:right;top:544px;font-size:12px;line-height:14px;color:#000;">26</div>
<div class="t" style="left:-172px;width:400px;text-align:right;top:564px;font-size:12px;line-height:14px;color:#000;">27</div>
<div class="t" style="left:-172px;width:400px;text-align:right;top:584px;font-size:12px;line-height:14px;color:#000;">28</div>
</div>
<div class="r" style="left:1419px;top:198px;width:21px;height:612px;background:#E6E6E6;"></div>
<div class="r" style="left:0px;top:810px;width:1419px;height:1px;background:#ABABAB;"></div>
<div class="r" style="left:1422px;top:216px;width:15px;height:594px;background:#DADADA;"></div>
<div class="r" style="left:1422px;top:200px;width:15px;height:15px;background:#fff;border:1px solid #ABABAB;box-sizing:border-box;"></div>
<svg class="r" style="left:1425px;top:204px;" width="9" height="6" viewBox="0 0 9 6"><path d="M0.5 5 H8.5 L4.5 1 Z" fill="#666"/></svg>
<div class="r" style="left:1422px;top:380px;width:15px;height:227px;background:#fff;border:1px solid #ABABAB;box-sizing:border-box;"></div>
<div class="r" style="left:1422px;top:796px;width:15px;height:15px;background:#fff;border:1px solid #ABABAB;box-sizing:border-box;"></div>
<svg class="r" style="left:1425px;top:801px;" width="9" height="6" viewBox="0 0 9 6"><path d="M0.5 1 H8.5 L4.5 5 Z" fill="#666"/></svg>
<div class="r" style="left:0px;top:810px;width:1440px;height:28px;background:#E6E6E6;"></div>
<div class="r" style="left:0px;top:810px;width:1419px;height:1px;background:#ABABAB;"></div>
<div class="r" style="left:0px;top:838px;width:1440px;height:1px;background:#C6C6C6;"></div>
<div class="r" style="left:0px;top:839px;width:1440px;height:2px;background:#F0F0F0;"></div>
<div class="r" style="left:1148px;top:839px;width:38px;height:2px;background:#C6C6C6;"></div>
<svg class="r" style="left:26px;top:819px;" width="6" height="9" viewBox="0 0 6 9"><path d="M5.5 0.5 V8.5 L0.5 4.5 Z" fill="#B8B8B8"/></svg>
<svg class="r" style="left:55px;top:819px;" width="6" height="9" viewBox="0 0 6 9"><path d="M0.5 0.5 V8.5 L5.5 4.5 Z" fill="#B8B8B8"/></svg>
<div class="r" style="left:100px;top:810px;width:65px;height:24px;background:#fff;border-left:1px solid #ABABAB;border-right:1px solid #ABABAB;box-sizing:border-box;"></div>
<div class="r" style="left:100px;top:833px;width:65px;height:2px;background:#217346;"></div>
<div class="t" style="left:112px;top:817px;font-size:12px;line-height:14px;color:#217346;font-weight:bold;">Sheet1</div>
<svg class="r" style="left:197px;top:815px;" width="18" height="18" viewBox="0 0 18 18"><circle cx="9" cy="9" r="7.5" fill="none" stroke="#777" stroke-width="1.1"/><path d="M9 4.5 V13.5 M4.5 9 H13.5" stroke="#777" stroke-width="1.8"/></svg>
<div class="r" style="left:864px;top:819px;width:2px;height:2px;background:#A0A0A0;"></div>
<div class="r" style="left:864px;top:823px;width:2px;height:2px;background:#A0A0A0;"></div>
<div class="r" style="left:864px;top:827px;width:2px;height:2px;background:#A0A0A0;"></div>
<div class="r" style="left:881px;top:817px;width:15px;height:15px;background:#fff;border:1px solid #ABABAB;box-sizing:border-box;"></div>
<svg class="r" style="left:885px;top:820px;" width="6" height="9" viewBox="0 0 6 9"><path d="M5 0.5 V8.5 L1 4.5 Z" fill="#666"/></svg>
<div class="r" style="left:896px;top:817px;width:474px;height:15px;background:#fff;border:1px solid #ABABAB;box-sizing:border-box;"></div>
<div class="r" style="left:1370px;top:817px;width:34px;height:15px;background:#DADADA;"></div>
<div class="r" style="left:1404px;top:817px;width:15px;height:15px;background:#fff;border:1px solid #ABABAB;box-sizing:border-box;"></div>
<svg class="r" style="left:1409px;top:820px;" width="6" height="9" viewBox="0 0 6 9"><path d="M1 0.5 V8.5 L5 4.5 Z" fill="#666"/></svg>
<div class="r" style="left:1422px;top:796px;width:15px;height:15px;background:#fff;border:1px solid #ABABAB;box-sizing:border-box;"></div>
<svg class="r" style="left:1425px;top:801px;" width="9" height="6" viewBox="0 0 9 6"><path d="M0.5 1 H8.5 L4.5 5 Z" fill="#666"/></svg>
</body></html>
